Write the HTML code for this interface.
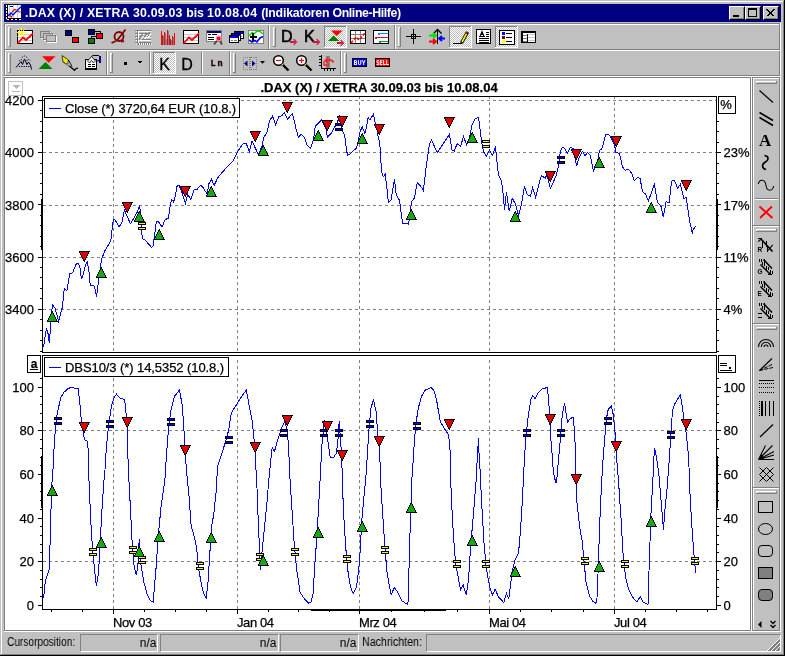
<!DOCTYPE html>
<html><head><meta charset="utf-8"><title>.DAX (X) / XETRA</title>
<style>
html,body{margin:0;padding:0;}
body{width:785px;height:656px;overflow:hidden;background:#c0c0c0;position:relative;font-family:"Liberation Sans",sans-serif;font-size:12px;color:#000;}
.abs{position:absolute;}
svg,#titletext,.st{will-change:transform;}
#titlebar{left:4px;top:4px;width:777px;height:18px;background:#000080;}
#titletext{left:25px;top:6px;white-space:pre;color:#fff;font-weight:bold;font-size:12.33px;line-height:14px;white-space:nowrap;}
.capbtn{top:6px;width:16px;height:14px;background:#c0c0c0;box-sizing:border-box;border:1px solid;border-color:#fff #000 #000 #fff;}
.capbtn i{position:absolute;left:0;top:0;right:0;bottom:0;border:1px solid;border-color:#c0c0c0 #808080 #808080 #c0c0c0;}
.hl{background:#fff;}
.sh{background:#808080;}
.grip{width:3px;box-sizing:border-box;border:1px solid;border-color:#fff #808080 #808080 #fff;background:#c0c0c0;}
.sunk{box-sizing:border-box;border:1px solid;border-color:#808080 #fff #fff #808080;}
#chart text{stroke:#000;stroke-width:.25px;}
.st{font-size:11px;line-height:13px;white-space:nowrap;}
</style></head><body>
<!-- window frame -->
<div class="abs hl" style="left:1px;top:1px;width:782px;height:1px"></div>
<div class="abs hl" style="left:1px;top:1px;width:1px;height:653px"></div>
<div class="abs sh" style="left:783px;top:1px;width:1px;height:654px"></div>
<div class="abs sh" style="left:1px;top:654px;width:783px;height:1px"></div>
<div class="abs" style="left:784px;top:0;width:1px;height:656px;background:#000"></div>
<div class="abs" style="left:0;top:655px;width:785px;height:1px;background:#000"></div>
<!-- title bar -->
<div id="titlebar" class="abs"></div>
<svg class="abs" style="left:6px;top:5px" width="15" height="15" viewBox="0 0 15 15">
<g shape-rendering="crispEdges"><rect x="0" y="0" width="15" height="15" fill="#000"/>
<rect x="2" y="0" width="13" height="13" fill="#fff"/>
<rect x="3" y="0" width="1" height="13" fill="#c8c8c8"/>
<rect x="7" y="0" width="1" height="13" fill="#c8c8c8"/>
<rect x="11" y="0" width="1" height="13" fill="#c8c8c8"/>
<rect x="0" y="0" width="1" height="2" fill="#fff"/>
<rect x="0" y="3" width="1" height="2" fill="#fff"/>
<rect x="0" y="6" width="1" height="2" fill="#fff"/>
<rect x="0" y="9" width="1" height="2" fill="#fff"/>
<rect x="0" y="12" width="1" height="2" fill="#fff"/>
<rect x="1" y="14" width="2" height="1" fill="#fff"/>
<rect x="5" y="14" width="2" height="1" fill="#fff"/>
<rect x="9" y="14" width="2" height="1" fill="#fff"/>
<rect x="13" y="14" width="2" height="1" fill="#fff"/>
<rect x="4" y="1" width="3" height="1" fill="#000"/></g>
<path d="M2 9L4 10L5.5 7.5L7 6L9 4.5L11 5.5L13 7H15" stroke="#ff0000" stroke-width="1.2" fill="none"/><path d="M4 10.5L5.3 12L6.5 10.5" stroke="#ff0000" stroke-width="1.2" fill="none"/>
<path d="M2 10L5 7L7 9L15 1" stroke="#00e0ff" stroke-width="1" fill="none"/>
<path d="M2 11L5 8L7 10L15 2" stroke="#0000ff" stroke-width="1.1" fill="none"/>
</svg>
<div id="titletext" class="abs"><span style="letter-spacing:.21px">.DAX (X) / XETRA 30.09.03 </span><span style="letter-spacing:-.09px">bis </span><span style="letter-spacing:.29px">10.08.04 </span><span style="letter-spacing:-.2px">(Indikatoren </span><span style="letter-spacing:-.4px">Online-Hilfe)</span></div>
<div class="abs capbtn" style="left:729px"><i></i><b class="abs" style="left:3px;top:8px;width:6px;height:2px;background:#000"></b></div>
<div class="abs capbtn" style="left:745px"><i></i><b class="abs" style="left:2px;top:1px;width:9px;height:9px;box-sizing:border-box;border:1px solid #000;border-top-width:2px"></b></div>
<div class="abs capbtn" style="left:763px"><i></i>
<svg class="abs" style="left:2px;top:2px" width="9" height="8" viewBox="0 0 9 8" shape-rendering="crispEdges"><path d="M0.5 0.5L7.5 7.5M1.5 0.5L8.5 7.5M7.5 0.5L0.5 7.5M8.5 0.5L1.5 7.5" stroke="#000" stroke-width="1" fill="none"/></svg></div>
<!-- toolbar etched frame -->
<div class="abs sh" style="left:4px;top:23px;width:776px;height:1px"></div>
<div class="abs hl" style="left:4px;top:24px;width:777px;height:1px"></div>
<div class="abs sh" style="left:4px;top:23px;width:1px;height:53px"></div>
<div class="abs hl" style="left:5px;top:24px;width:1px;height:52px"></div>
<div class="abs sh" style="left:779px;top:24px;width:1px;height:52px"></div>
<div class="abs hl" style="left:780px;top:23px;width:1px;height:54px"></div>
<div class="abs sh" style="left:4px;top:49px;width:776px;height:1px"></div>
<div class="abs hl" style="left:5px;top:50px;width:775px;height:1px"></div>
<div class="abs sh" style="left:4px;top:75px;width:776px;height:1px"></div>
<div class="abs hl" style="left:4px;top:76px;width:777px;height:1px"></div>
<div class="abs grip" style="left:8px;top:27px;height:20px"></div>
<div class="abs grip" style="left:8px;top:53px;height:20px"></div>
<svg class="abs" style="left:0;top:0" width="785" height="77" viewBox="0 0 785 77" font-family="'Liberation Sans',sans-serif">
<defs><pattern id="chk" width="2" height="2" patternUnits="userSpaceOnUse"><rect width="2" height="2" fill="#fff"/><rect x="0" y="0" width="1" height="1" fill="#c0c0c0"/><rect x="1" y="1" width="1" height="1" fill="#c0c0c0"/></pattern></defs>
<g shape-rendering="crispEdges">
<rect x="268" y="25" width="1" height="24" fill="#808080"/><rect x="269" y="25" width="1" height="24" fill="#fff"/>
<rect x="273" y="27" width="3" height="20" fill="#c0c0c0"/><rect x="273" y="27" width="1" height="20" fill="#fff"/><rect x="273" y="27" width="3" height="1" fill="#fff"/><rect x="275" y="27" width="1" height="20" fill="#808080"/><rect x="273" y="46" width="3" height="1" fill="#808080"/>
<rect x="394" y="25" width="1" height="24" fill="#808080"/><rect x="395" y="25" width="1" height="24" fill="#fff"/>
<rect x="398" y="27" width="3" height="20" fill="#c0c0c0"/><rect x="398" y="27" width="1" height="20" fill="#fff"/><rect x="398" y="27" width="3" height="1" fill="#fff"/><rect x="400" y="27" width="1" height="20" fill="#808080"/><rect x="398" y="46" width="3" height="1" fill="#808080"/>
<rect x="106" y="51" width="1" height="24" fill="#808080"/><rect x="107" y="51" width="1" height="24" fill="#fff"/>
<rect x="110" y="53" width="3" height="20" fill="#c0c0c0"/><rect x="110" y="53" width="1" height="20" fill="#fff"/><rect x="110" y="53" width="3" height="1" fill="#fff"/><rect x="112" y="53" width="1" height="20" fill="#808080"/><rect x="110" y="72" width="3" height="1" fill="#808080"/>
<rect x="149" y="52" width="1" height="22" fill="#808080"/><rect x="150" y="52" width="1" height="22" fill="#fff"/>
<rect x="201" y="52" width="1" height="22" fill="#808080"/><rect x="202" y="52" width="1" height="22" fill="#fff"/>
<rect x="229" y="51" width="1" height="24" fill="#808080"/><rect x="230" y="51" width="1" height="24" fill="#fff"/>
<rect x="233" y="53" width="3" height="20" fill="#c0c0c0"/><rect x="233" y="53" width="1" height="20" fill="#fff"/><rect x="233" y="53" width="3" height="1" fill="#fff"/><rect x="235" y="53" width="1" height="20" fill="#808080"/><rect x="233" y="72" width="3" height="1" fill="#808080"/>
<rect x="340" y="51" width="1" height="24" fill="#808080"/><rect x="341" y="51" width="1" height="24" fill="#fff"/>
<rect x="344" y="53" width="3" height="20" fill="#c0c0c0"/><rect x="344" y="53" width="1" height="20" fill="#fff"/><rect x="344" y="53" width="3" height="1" fill="#fff"/><rect x="346" y="53" width="1" height="20" fill="#808080"/><rect x="344" y="72" width="3" height="1" fill="#808080"/>
<rect x="17.5" y="30.5" width="15" height="13" fill="#fff" stroke="#000"/>
<rect x="18" y="34" width="14" height="1" fill="#c8c8c8"/>
<rect x="18" y="37" width="14" height="1" fill="#c8c8c8"/>
<rect x="18" y="40" width="14" height="1" fill="#c8c8c8"/>
</g>
<path d="M17.5 43.5L23 37.5L26 40L33 33.5" stroke="#ff0000" stroke-width="1.8" fill="none"/>
<path d="M17.5 28.5L25.5 36.5M25.5 28.5L17.5 36.5M21.5 27.5V37.5M16.5 32.5H26.5" stroke="#ffff00" stroke-width="0.9"/>
<g shape-rendering="crispEdges">
<rect x="41.5" y="32.5" width="9" height="6" fill="#c0c0c0" stroke="#fff"/>
<rect x="40.5" y="31.5" width="9" height="6" fill="#c0c0c0" stroke="#808080"/>
<rect x="44.5" y="34.5" width="9" height="6" fill="#c0c0c0" stroke="#fff"/>
<rect x="43.5" y="33.5" width="9" height="6" fill="#c0c0c0" stroke="#808080"/>
<rect x="47.5" y="36.5" width="9" height="6" fill="#c0c0c0" stroke="#fff"/>
<rect x="46.5" y="35.5" width="9" height="6" fill="#c0c0c0" stroke="#808080"/>
<rect x="65.5" y="30.5" width="6" height="5" fill="#000080" stroke="#000"/>
<rect x="72.5" y="37.5" width="6" height="5" fill="#ff0000" stroke="#000"/>
<path d="M95 31.5H100.5V33M96 36.5H91.5V38" stroke="#000" fill="none"/>
<rect x="88.5" y="29.5" width="6" height="5" fill="#000080" stroke="#000"/>
<rect x="96.5" y="33.5" width="6" height="5" fill="#ff0000" stroke="#000"/>
<rect x="88.5" y="38.5" width="6" height="5" fill="#008000" stroke="#000"/>
</g>
<g stroke="#800000" stroke-width="1.8" fill="none"><circle cx="119" cy="36.5" r="4.5"/><path d="M125.5 29.5L117 40.5M116 41L111.5 43M121 41.5L124 41"/></g>
<g shape-rendering="crispEdges">
<rect x="135" y="30" width="16" height="1" fill="#808080"/><rect x="136" y="31" width="15" height="1" fill="#fff"/>
<rect x="135" y="33" width="16" height="1" fill="#808080"/><rect x="136" y="34" width="15" height="1" fill="#fff"/>
<rect x="135" y="36" width="16" height="1" fill="#808080"/><rect x="136" y="37" width="15" height="1" fill="#fff"/>
<rect x="135" y="39" width="16" height="1" fill="#808080"/><rect x="136" y="40" width="15" height="1" fill="#fff"/>
<rect x="135" y="42" width="16" height="1" fill="#808080"/><rect x="136" y="43" width="15" height="1" fill="#fff"/>
<rect x="137" y="30" width="1" height="14" fill="#808080"/><rect x="138" y="31" width="1" height="13" fill="#fff"/>
<rect x="138" y="43" width="1" height="2" fill="#808080"/><rect x="139" y="44" width="1" height="1" fill="#fff"/>
<rect x="140" y="43" width="1" height="2" fill="#808080"/><rect x="141" y="44" width="1" height="1" fill="#fff"/>
<rect x="142" y="43" width="1" height="2" fill="#808080"/><rect x="143" y="44" width="1" height="1" fill="#fff"/>
<rect x="144" y="43" width="1" height="2" fill="#808080"/><rect x="145" y="44" width="1" height="1" fill="#fff"/>
<rect x="146" y="43" width="1" height="2" fill="#808080"/><rect x="147" y="44" width="1" height="1" fill="#fff"/>
<rect x="148" y="43" width="1" height="2" fill="#808080"/><rect x="149" y="44" width="1" height="1" fill="#fff"/>
<rect x="150" y="43" width="1" height="2" fill="#808080"/><rect x="151" y="44" width="1" height="1" fill="#fff"/>
</g>
<path d="M139 40L142 35L144 38L146 34L148 36L150 32" stroke="#808080" stroke-width="1.5" fill="none"/>
<path d="M140 41L143 36L145 39L147 35L149 37L151 33" stroke="#fff" stroke-width="1" fill="none"/>
<g shape-rendering="crispEdges">
<rect x="161" y="31" width="1" height="14" fill="#ff0000"/>
<rect x="162" y="35" width="1" height="10" fill="#ff0000"/>
<rect x="163" y="36" width="1" height="9" fill="#6a8a8a"/>
<rect x="164" y="32" width="1" height="13" fill="#ff0000"/>
<rect x="165" y="33" width="1" height="12" fill="#6a8a8a"/>
<rect x="166" y="39" width="1" height="6" fill="#6a8a8a"/>
<rect x="167" y="30" width="1" height="15" fill="#ff0000"/>
<rect x="168" y="31" width="1" height="14" fill="#6a8a8a"/>
<rect x="169" y="35" width="1" height="10" fill="#ff0000"/>
<rect x="170" y="39" width="1" height="6" fill="#ff0000"/>
<rect x="171" y="40" width="1" height="5" fill="#6a8a8a"/>
<rect x="172" y="36" width="1" height="9" fill="#ff0000"/>
<rect x="173" y="37" width="1" height="8" fill="#6a8a8a"/>
<rect x="174" y="33" width="1" height="12" fill="#ff0000"/>
<rect x="183.5" y="30.5" width="15" height="13" fill="#fff" stroke="#000"/>
<rect x="184" y="34" width="14" height="1" fill="#c8c8c8"/>
<rect x="184" y="37" width="14" height="1" fill="#c8c8c8"/>
<rect x="184" y="40" width="14" height="1" fill="#c8c8c8"/>
</g>
<path d="M183.5 43.5L189 37.5L192 40L199 33.5" stroke="#ff0000" stroke-width="1.8" fill="none"/>
<g shape-rendering="crispEdges">
<rect x="206.5" y="30.5" width="15" height="11" fill="#fff" stroke="#808080"/>
<rect x="207" y="31" width="14" height="2" fill="#000080"/>
<rect x="208" y="34" width="3" height="1" fill="#000"/><rect x="212" y="34" width="5" height="1" fill="#000"/><rect x="208" y="37" width="6" height="1" fill="#000"/><rect x="208" y="39" width="6" height="1" fill="#000"/>
</g>
<path d="M217.5 40L214 44.5M219.5 40L222 44.5" stroke="#404040" stroke-width="1.6"/>
<circle cx="218.7" cy="38.5" r="2.9" fill="#ff90b0"/><circle cx="218.7" cy="38.5" r="1.8" fill="#ff0000"/>
<g shape-rendering="crispEdges">
<rect x="234.5" y="31.5" width="9" height="7" fill="#fff" stroke="#000"/>
<rect x="235" y="32" width="8" height="2" fill="#0000e0"/>
<rect x="236" y="36" width="2" height="1" fill="#808080"/><rect x="239" y="36" width="3" height="1" fill="#808080"/>
<rect x="231.5" y="33.5" width="9" height="7" fill="#fff" stroke="#000"/>
<rect x="232" y="34" width="8" height="2" fill="#0000e0"/>
<rect x="233" y="38" width="2" height="1" fill="#808080"/><rect x="236" y="38" width="3" height="1" fill="#808080"/>
<rect x="229.5" y="35.5" width="9" height="7" fill="#fff" stroke="#000"/>
<rect x="230" y="36" width="8" height="2" fill="#0000e0"/>
<rect x="231" y="40" width="2" height="1" fill="#808080"/><rect x="234" y="40" width="3" height="1" fill="#808080"/>
<rect x="248.5" y="30.5" width="15" height="13" fill="#fff" stroke="#808080"/>
</g>
<path d="M249 36L252 32.5L254 34L257 31L260 31.5L263 34" stroke="#00e000" stroke-width="1.6" fill="none"/>
<path d="M249 40L252 42L255 40.5L257 42L260 38L263 36.5" stroke="#0000ff" stroke-width="1.6" fill="none"/>
<g shape-rendering="crispEdges">
<rect x="250" y="36" width="7" height="2" fill="#000"/><rect x="252" y="33" width="2" height="8" fill="#000"/>
</g>
<text x="281" y="42" font-size="16" stroke="#000" stroke-width="0.6">D</text>
<text x="304" y="42" font-size="16.3" stroke="#000" stroke-width="0.6">K</text>
<path d="M290 41H294.8V43H290Z" fill="#cc1038"/><path d="M294.1 38.8L297.3 42L294.1 45.2L293.3 44.4L295.5 42L293.3 39.6Z" fill="#cc1038"/>
<path d="M313 41H317.8V43H313Z" fill="#cc1038"/><path d="M317.1 38.8L320.3 42L317.1 45.2L316.3 44.4L318.5 42L316.3 39.6Z" fill="#cc1038"/>
<g shape-rendering="crispEdges">
<rect x="324" y="26" width="23" height="22" fill="url(#chk)"/>
<rect x="324" y="26" width="23" height="1" fill="#808080"/><rect x="324" y="26" width="1" height="22" fill="#808080"/>
<rect x="324" y="47" width="23" height="1" fill="#fff"/><rect x="346" y="26" width="1" height="22" fill="#fff"/>
</g>
<path d="M331 30.5H342.5L336.7 36Z" fill="#ff0000"/><path d="M333.7 35.5L339.5 41H328Z" fill="#008000"/>
<path d="M337 42H341.8V44H337Z" fill="#cc1038"/><path d="M341.1 39.8L344.3 43L341.1 46.2L340.3 45.4L342.5 43L340.3 40.6Z" fill="#cc1038"/>
<g shape-rendering="crispEdges">
<rect x="350.5" y="30.5" width="15" height="13" fill="#fff" stroke="#000"/>
<rect x="355" y="31" width="1" height="12" fill="#808080"/><rect x="360" y="31" width="1" height="12" fill="#808080"/><rect x="351" y="34" width="14" height="1" fill="#808080"/><rect x="351" y="38" width="14" height="1" fill="#808080"/>
</g>
<path d="M351 43L356 37L359 40L365 33" stroke="#ff0000" stroke-width="1.6" stroke-dasharray="3 1.5" fill="none"/>
<g shape-rendering="crispEdges">
<rect x="373.5" y="30.5" width="15" height="13" fill="#fff" stroke="#000"/>
<rect x="379" y="33" width="9" height="1" fill="#0090ff"/><rect x="378" y="33" width="2" height="2" fill="#0090ff"/>
<rect x="375" y="37" width="13" height="1" fill="#cc1038"/><rect x="375" y="37" width="2" height="2" fill="#cc1038"/>
<rect x="380" y="41" width="8" height="1" fill="#00a040"/><rect x="379" y="41" width="2" height="2" fill="#00a040"/>
<rect x="406" y="36" width="15" height="1" fill="#000"/><rect x="413" y="29" width="1" height="15" fill="#000"/>
<rect x="411.5" y="34.5" width="4" height="4" fill="none" stroke="#000"/>
<rect x="437" y="30" width="1" height="14" fill="#000"/>
</g>
<path d="M433.5 33.5L437.5 29.5L441.5 33.5" stroke="#000" stroke-width="1.4" fill="none"/>
<path d="M429 35.5H436M433 33L436 35.5L433 38" stroke="#00e000" stroke-width="1.8" fill="none"/>
<path d="M429 41.5H436M433 39L436 41.5L433 44" stroke="#ff0000" stroke-width="1.8" fill="none"/>
<path d="M445 38.5H439M442 36L439 38.5L442 41" stroke="#0000ff" stroke-width="1.8" fill="none"/>
<g shape-rendering="crispEdges">
<rect x="449" y="26" width="23" height="22" fill="url(#chk)"/>
<rect x="449" y="26" width="23" height="1" fill="#808080"/><rect x="449" y="26" width="1" height="22" fill="#808080"/>
<rect x="449" y="47" width="23" height="1" fill="#fff"/><rect x="471" y="26" width="1" height="22" fill="#fff"/>
<rect x="453" y="43" width="9" height="1" fill="#000"/>
</g>
<path d="M461.5 43L467.5 32" stroke="#000" stroke-width="3.4"/><path d="M462 42L466.5 33.7" stroke="#ffff00" stroke-width="1.6"/><path d="M466.8 33.2L467.6 31.8" stroke="#e00000" stroke-width="1.6"/>
<g shape-rendering="crispEdges">
<rect x="476.5" y="29.5" width="14" height="14" fill="#fff" stroke="#000"/>
<rect x="479" y="38" width="10" height="1" fill="#000"/>
<rect x="479" y="40" width="10" height="1" fill="#000"/>
<rect x="479" y="42" width="10" height="1" fill="#000"/>
<rect x="486" y="32" width="3" height="1" fill="#000"/>
<rect x="486" y="34" width="3" height="1" fill="#000"/>
<rect x="486" y="36" width="3" height="1" fill="#000"/>
</g>
<path d="M479 36.5H485M480.2 36L482 31.5L483.8 36M480.8 34.5H483.2" stroke="#000" stroke-width="1.1" fill="none"/>
<g shape-rendering="crispEdges">
<rect x="495" y="26" width="23" height="22" fill="url(#chk)"/>
<rect x="495" y="26" width="23" height="1" fill="#808080"/><rect x="495" y="26" width="1" height="22" fill="#808080"/>
<rect x="495" y="47" width="23" height="1" fill="#fff"/><rect x="517" y="26" width="1" height="22" fill="#fff"/>
<rect x="499.5" y="30.5" width="15" height="14" fill="#fff" stroke="#000"/>
<rect x="502" y="32" width="3" height="3" fill="#0000ff"/><rect x="506" y="33" width="6" height="1" fill="#000"/>
<rect x="502" y="36" width="3" height="3" fill="#800000"/><rect x="506" y="37" width="6" height="1" fill="#000"/>
<rect x="502" y="40" width="3" height="3" fill="#ffff00"/><rect x="506" y="41" width="6" height="1" fill="#000"/>
<rect x="521.5" y="31.5" width="14" height="11" fill="#fff" stroke="#000"/>
<rect x="522" y="32" width="13" height="1" fill="#000"/><rect x="522" y="32" width="1" height="10" fill="#000"/>
<rect x="523" y="35" width="4" height="1" fill="#808080"/><rect x="528" y="34" width="7" height="1" fill="#c8c8c8"/>
<rect x="523" y="38" width="4" height="1" fill="#808080"/><rect x="528" y="37" width="7" height="1" fill="#c8c8c8"/>
<rect x="523" y="41" width="4" height="1" fill="#808080"/><rect x="528" y="40" width="7" height="1" fill="#c8c8c8"/>
<rect x="527" y="34" width="1" height="8" fill="#000"/>
</g>
<path d="M16 67.5L21 61.5L22.5 64.5L24.5 59L27 64.5L28.5 62L30.5 65L31.5 69.5" stroke="#000" stroke-width="1" fill="none"/>
<g stroke="#000090" stroke-width="1" fill="none" stroke-dasharray="1.3 1"><path d="M19 61Q21 58 23 61"/><path d="M22 57.5Q24.5 54.5 27 57.5"/><path d="M26.5 61Q28.5 58 30.5 61"/><path d="M19 66.5H30"/></g>
<path d="M42 56.3H55.5L48.7 62.7Z" fill="#ff0000"/><path d="M45.5 62L52.5 69H38.5Z" fill="#008000"/>
<path d="M62 55.5L68.5 60L67.5 64.5L63 62Z" fill="#f4e800" stroke="#000" stroke-width="0.7"/>
<path d="M63 62L67.5 64.5L71 67L67 65.5Z" fill="#fff" stroke="#404040" stroke-width="0.6"/>
<path d="M68.5 60L72 66.5" stroke="#000" stroke-width="0.9"/>
<path d="M69.5 66L74.5 70.3L76 68.5L78 68.2" stroke="#000" stroke-width="1.2" fill="none"/>
<g shape-rendering="crispEdges">
<rect x="85" y="59" width="12" height="11" fill="#000"/><rect x="86" y="60" width="10" height="8" fill="#fff"/>
<rect x="88" y="64" width="3" height="1" fill="#000"/><rect x="92" y="64" width="3" height="1" fill="#000"/><rect x="88" y="66" width="3" height="1" fill="#000"/><rect x="92" y="66" width="3" height="1" fill="#000"/>
<rect x="99" y="56" width="2" height="7" fill="#000090"/>
</g>
<path d="M87.5 61L91.5 56.5L95.5 61L93.5 63L91.5 60.5L89.5 63Z" fill="#f0f0f0" stroke="#000" stroke-width="0.8"/><path d="M91.5 56.5L93 55.5H99" stroke="#000" stroke-width="1" fill="none"/><path d="M96 61.5L99 60.5" stroke="#000" stroke-width="1"/>
<g shape-rendering="crispEdges">
<rect x="124" y="62" width="3" height="3" fill="#000"/>
<path d="M137 61H142L139.5 63.5Z" fill="#000"/>
<rect x="153" y="52" width="23" height="22" fill="url(#chk)"/>
<rect x="153" y="52" width="23" height="1" fill="#808080"/><rect x="153" y="52" width="1" height="22" fill="#808080"/>
<rect x="153" y="73" width="23" height="1" fill="#fff"/><rect x="175" y="52" width="1" height="22" fill="#fff"/>
</g>
<text x="159.3" y="69.5" font-size="16" stroke="#000" stroke-width="0.35">K</text>
<text x="181.3" y="69.5" font-size="16" stroke="#000" stroke-width="0.35">D</text>
<text x="210.5" y="66" font-size="8.5" font-weight="bold" fill="#200808" letter-spacing="1.8" font-family="'Liberation Mono',monospace" stroke="#200808" stroke-width="0.4">Ln</text>
<g shape-rendering="crispEdges">
<rect x="243" y="57" width="1" height="1" fill="#808080"/>
<rect x="243" y="69" width="1" height="1" fill="#808080"/>
<rect x="245" y="57" width="1" height="1" fill="#808080"/>
<rect x="245" y="69" width="1" height="1" fill="#808080"/>
<rect x="247" y="57" width="1" height="1" fill="#808080"/>
<rect x="247" y="69" width="1" height="1" fill="#808080"/>
<rect x="249" y="57" width="1" height="1" fill="#808080"/>
<rect x="249" y="69" width="1" height="1" fill="#808080"/>
<rect x="251" y="57" width="1" height="1" fill="#808080"/>
<rect x="251" y="69" width="1" height="1" fill="#808080"/>
<rect x="253" y="57" width="1" height="1" fill="#808080"/>
<rect x="253" y="69" width="1" height="1" fill="#808080"/>
<rect x="255" y="57" width="1" height="1" fill="#808080"/>
<rect x="255" y="69" width="1" height="1" fill="#808080"/>
<rect x="243" y="57" width="1" height="1" fill="#808080"/>
<rect x="249" y="57" width="1" height="1" fill="#808080"/>
<rect x="250" y="57" width="1" height="1" fill="#808080"/>
<rect x="256" y="57" width="1" height="1" fill="#808080"/>
<rect x="243" y="59" width="1" height="1" fill="#808080"/>
<rect x="249" y="59" width="1" height="1" fill="#808080"/>
<rect x="250" y="59" width="1" height="1" fill="#808080"/>
<rect x="256" y="59" width="1" height="1" fill="#808080"/>
<rect x="243" y="61" width="1" height="1" fill="#808080"/>
<rect x="249" y="61" width="1" height="1" fill="#808080"/>
<rect x="250" y="61" width="1" height="1" fill="#808080"/>
<rect x="256" y="61" width="1" height="1" fill="#808080"/>
<rect x="243" y="63" width="1" height="1" fill="#808080"/>
<rect x="249" y="63" width="1" height="1" fill="#808080"/>
<rect x="250" y="63" width="1" height="1" fill="#808080"/>
<rect x="256" y="63" width="1" height="1" fill="#808080"/>
<rect x="243" y="65" width="1" height="1" fill="#808080"/>
<rect x="249" y="65" width="1" height="1" fill="#808080"/>
<rect x="250" y="65" width="1" height="1" fill="#808080"/>
<rect x="256" y="65" width="1" height="1" fill="#808080"/>
<rect x="243" y="67" width="1" height="1" fill="#808080"/>
<rect x="249" y="67" width="1" height="1" fill="#808080"/>
<rect x="250" y="67" width="1" height="1" fill="#808080"/>
<rect x="256" y="67" width="1" height="1" fill="#808080"/>
<rect x="243" y="69" width="1" height="1" fill="#808080"/>
<rect x="249" y="69" width="1" height="1" fill="#808080"/>
<rect x="250" y="69" width="1" height="1" fill="#808080"/>
<rect x="256" y="69" width="1" height="1" fill="#808080"/>
</g>
<path d="M244 63.5L247.5 60.5V66.5Z" fill="#000090"/><path d="M255.5 63.5L252 60.5V66.5Z" fill="#000090"/>
<path d="M260 61H265L262.5 63.8Z" fill="#000"/>
<path d="M282.5 64.5L288.5 70.5" stroke="#000" stroke-width="2.4"/>
<circle cx="278.5" cy="60.5" r="4.8" fill="#fff" stroke="#000" stroke-width="1.5"/>
<path d="M276.0 60.5H281.0" stroke="#ff0000" stroke-width="1.2"/>
<rect x="281.8" y="63.8" width="1.4" height="1.4" fill="#ffff00"/>
<path d="M305.5 64.5L311.5 70.5" stroke="#000" stroke-width="2.4"/>
<circle cx="301.5" cy="60.5" r="4.8" fill="#fff" stroke="#000" stroke-width="1.5"/>
<path d="M299.0 60.5H304.0" stroke="#ff0000" stroke-width="1.2"/>
<path d="M301.5 58V63" stroke="#ff0000" stroke-width="1.2"/>
<rect x="304.8" y="63.8" width="1.4" height="1.4" fill="#ffff00"/>
<g shape-rendering="crispEdges">
<rect x="326" y="56" width="4" height="12" fill="#808080"/>
<rect x="321" y="55" width="1" height="14" fill="#000"/><rect x="321" y="68" width="15" height="1" fill="#000"/>
<rect x="319" y="56" width="2" height="1" fill="#000"/>
<rect x="319" y="59" width="2" height="1" fill="#000"/>
<rect x="319" y="62" width="2" height="1" fill="#000"/>
<rect x="319" y="65" width="2" height="1" fill="#000"/>
<rect x="324" y="69" width="1" height="2" fill="#000"/>
<rect x="327" y="69" width="1" height="2" fill="#000"/>
<rect x="330" y="69" width="1" height="2" fill="#000"/>
<rect x="333" y="69" width="1" height="2" fill="#000"/>
</g>
<path d="M333.5 62.5Q332 58.5 325 60.5" stroke="#ff2020" stroke-width="1.8" fill="none"/><path d="M327.5 57.5L324 61L328.5 63.5Z" fill="#ff2020"/><path d="M324 61V65H329" stroke="#ff2020" stroke-width="1.4" fill="none"/>
<g shape-rendering="crispEdges">
<rect x="352.5" y="58.5" width="14" height="8" fill="#0000ff" stroke="#000"/>
<rect x="375.5" y="58.5" width="14" height="8" fill="#ff0000" stroke="#000"/>
</g>
<text x="359.5" y="65" font-size="6.5" font-weight="bold" fill="#fff" text-anchor="middle" font-family="'DejaVu Sans',sans-serif" textLength="12" lengthAdjust="spacingAndGlyphs">BUY</text>
<text x="382.5" y="65" font-size="6.5" font-weight="bold" fill="#fff" text-anchor="middle" font-family="'DejaVu Sans',sans-serif" textLength="12.5" lengthAdjust="spacingAndGlyphs">SELL</text>
</svg>

<!-- client area -->
<div class="abs" style="left:4px;top:77px;width:746px;height:553px;background:#fff;box-sizing:border-box;border-left:1px solid #808080;border-top:1px solid #808080"></div>
<div class="abs sh" style="left:750px;top:77px;width:1px;height:554px"></div>
<div class="abs hl" style="left:751px;top:76px;width:1px;height:556px"></div>
<svg id="chart" class="abs" style="left:0;top:0" width="785" height="656" viewBox="0 0 785 656" font-family="'Liberation Sans',sans-serif" font-size="13">
<g shape-rendering="crispEdges">
<rect x="8.5" y="81.5" width="14" height="14" fill="#fff" stroke="#c0c0c0"/>
<path d="M12 85h8l-4 4z" fill="#b8b8b8"/><rect x="12" y="91" width="8" height="1" fill="#b8b8b8"/>
<path d="M43 100.5H716" stroke="#808080" stroke-dasharray="3 3" fill="none"/>
<path d="M43 152.5H716" stroke="#808080" stroke-dasharray="3 3" fill="none"/>
<path d="M43 205.5H716" stroke="#808080" stroke-dasharray="3 3" fill="none"/>
<path d="M43 257.5H716" stroke="#808080" stroke-dasharray="3 3" fill="none"/>
<path d="M43 309.5H716" stroke="#808080" stroke-dasharray="3 3" fill="none"/>
<path d="M43 430.5H716" stroke="#808080" stroke-dasharray="3 3" fill="none"/>
<path d="M43 561.5H716" stroke="#808080" stroke-dasharray="3 3" fill="none"/>
<path d="M113.5 96V352" stroke="#808080" stroke-dasharray="3 3" fill="none"/>
<path d="M113.5 360V609" stroke="#808080" stroke-dasharray="3 3" fill="none"/>
<path d="M237.5 96V352" stroke="#808080" stroke-dasharray="3 3" fill="none"/>
<path d="M237.5 360V609" stroke="#808080" stroke-dasharray="3 3" fill="none"/>
<path d="M359.5 96V352" stroke="#808080" stroke-dasharray="3 3" fill="none"/>
<path d="M359.5 360V609" stroke="#808080" stroke-dasharray="3 3" fill="none"/>
<path d="M489.5 96V352" stroke="#808080" stroke-dasharray="3 3" fill="none"/>
<path d="M489.5 360V609" stroke="#808080" stroke-dasharray="3 3" fill="none"/>
<path d="M614.5 96V352" stroke="#808080" stroke-dasharray="3 3" fill="none"/>
<path d="M614.5 360V609" stroke="#808080" stroke-dasharray="3 3" fill="none"/>
<g fill="#000">
<rect x="42" y="96" width="675" height="1"/>
<rect x="42" y="352" width="675" height="1"/>
<rect x="42" y="96" width="1" height="257"/>
<rect x="716" y="96" width="1" height="257"/>
<rect x="41" y="199" width="1" height="51"/>
<rect x="717" y="199" width="1" height="51"/>
<rect x="42" y="355" width="675" height="1"/>
<rect x="42" y="609" width="675" height="1"/>
<rect x="42" y="355" width="1" height="255"/>
<rect x="716" y="355" width="1" height="255"/>
<rect x="41" y="456" width="1" height="52"/>
<rect x="717" y="456" width="1" height="52"/>
<rect x="311" y="610" width="135" height="1"/>
<rect x="38" y="100" width="4" height="1"/>
<rect x="40" y="110" width="2" height="1"/>
<rect x="40" y="121" width="2" height="1"/>
<rect x="717" y="121" width="2" height="1"/>
<rect x="40" y="131" width="2" height="1"/>
<rect x="717" y="131" width="2" height="1"/>
<rect x="40" y="142" width="2" height="1"/>
<rect x="717" y="142" width="2" height="1"/>
<rect x="38" y="152" width="4" height="1"/>
<rect x="717" y="152" width="4" height="1"/>
<rect x="40" y="163" width="2" height="1"/>
<rect x="717" y="163" width="2" height="1"/>
<rect x="40" y="173" width="2" height="1"/>
<rect x="717" y="173" width="2" height="1"/>
<rect x="40" y="183" width="2" height="1"/>
<rect x="717" y="183" width="2" height="1"/>
<rect x="40" y="194" width="2" height="1"/>
<rect x="717" y="194" width="2" height="1"/>
<rect x="38" y="204" width="4" height="1"/>
<rect x="717" y="204" width="4" height="1"/>
<rect x="40" y="215" width="2" height="1"/>
<rect x="717" y="215" width="2" height="1"/>
<rect x="40" y="225" width="2" height="1"/>
<rect x="717" y="225" width="2" height="1"/>
<rect x="40" y="236" width="2" height="1"/>
<rect x="717" y="236" width="2" height="1"/>
<rect x="40" y="246" width="2" height="1"/>
<rect x="717" y="246" width="2" height="1"/>
<rect x="38" y="257" width="4" height="1"/>
<rect x="717" y="257" width="4" height="1"/>
<rect x="40" y="267" width="2" height="1"/>
<rect x="717" y="267" width="2" height="1"/>
<rect x="40" y="277" width="2" height="1"/>
<rect x="717" y="277" width="2" height="1"/>
<rect x="40" y="288" width="2" height="1"/>
<rect x="717" y="288" width="2" height="1"/>
<rect x="40" y="298" width="2" height="1"/>
<rect x="717" y="298" width="2" height="1"/>
<rect x="38" y="309" width="4" height="1"/>
<rect x="717" y="309" width="4" height="1"/>
<rect x="40" y="319" width="2" height="1"/>
<rect x="717" y="319" width="2" height="1"/>
<rect x="40" y="330" width="2" height="1"/>
<rect x="717" y="330" width="2" height="1"/>
<rect x="40" y="340" width="2" height="1"/>
<rect x="717" y="340" width="2" height="1"/>
<rect x="40" y="351" width="2" height="1"/>
<rect x="717" y="351" width="2" height="1"/>
<rect x="40" y="378" width="2" height="1"/><rect x="717" y="378" width="2" height="1"/>
<rect x="38" y="387" width="4" height="1"/><rect x="717" y="387" width="4" height="1"/>
<rect x="40" y="396" width="2" height="1"/><rect x="717" y="396" width="2" height="1"/>
<rect x="40" y="404" width="2" height="1"/><rect x="717" y="404" width="2" height="1"/>
<rect x="40" y="413" width="2" height="1"/><rect x="717" y="413" width="2" height="1"/>
<rect x="40" y="422" width="2" height="1"/><rect x="717" y="422" width="2" height="1"/>
<rect x="38" y="430" width="4" height="1"/><rect x="717" y="430" width="4" height="1"/>
<rect x="40" y="439" width="2" height="1"/><rect x="717" y="439" width="2" height="1"/>
<rect x="40" y="448" width="2" height="1"/><rect x="717" y="448" width="2" height="1"/>
<rect x="40" y="457" width="2" height="1"/><rect x="717" y="457" width="2" height="1"/>
<rect x="40" y="465" width="2" height="1"/><rect x="717" y="465" width="2" height="1"/>
<rect x="38" y="474" width="4" height="1"/><rect x="717" y="474" width="4" height="1"/>
<rect x="40" y="483" width="2" height="1"/><rect x="717" y="483" width="2" height="1"/>
<rect x="40" y="491" width="2" height="1"/><rect x="717" y="491" width="2" height="1"/>
<rect x="40" y="500" width="2" height="1"/><rect x="717" y="500" width="2" height="1"/>
<rect x="40" y="509" width="2" height="1"/><rect x="717" y="509" width="2" height="1"/>
<rect x="38" y="518" width="4" height="1"/><rect x="717" y="518" width="4" height="1"/>
<rect x="40" y="526" width="2" height="1"/><rect x="717" y="526" width="2" height="1"/>
<rect x="40" y="535" width="2" height="1"/><rect x="717" y="535" width="2" height="1"/>
<rect x="40" y="544" width="2" height="1"/><rect x="717" y="544" width="2" height="1"/>
<rect x="40" y="552" width="2" height="1"/><rect x="717" y="552" width="2" height="1"/>
<rect x="38" y="561" width="4" height="1"/><rect x="717" y="561" width="4" height="1"/>
<rect x="40" y="570" width="2" height="1"/><rect x="717" y="570" width="2" height="1"/>
<rect x="40" y="579" width="2" height="1"/><rect x="717" y="579" width="2" height="1"/>
<rect x="40" y="587" width="2" height="1"/><rect x="717" y="587" width="2" height="1"/>
<rect x="40" y="596" width="2" height="1"/><rect x="717" y="596" width="2" height="1"/>
<rect x="38" y="605" width="4" height="1"/><rect x="717" y="605" width="4" height="1"/>
<rect x="51" y="610" width="1" height="2"/>
<rect x="82" y="610" width="1" height="2"/>
<rect x="113" y="610" width="1" height="4"/>
<rect x="144" y="610" width="1" height="2"/>
<rect x="175" y="610" width="1" height="2"/>
<rect x="206" y="610" width="1" height="2"/>
<rect x="237" y="610" width="1" height="4"/>
<rect x="268" y="610" width="1" height="2"/>
<rect x="298" y="610" width="1" height="2"/>
<rect x="329" y="610" width="1" height="2"/>
<rect x="359" y="610" width="1" height="4"/>
<rect x="391" y="610" width="1" height="2"/>
<rect x="424" y="610" width="1" height="2"/>
<rect x="457" y="610" width="1" height="2"/>
<rect x="489" y="610" width="1" height="4"/>
<rect x="520" y="610" width="1" height="2"/>
<rect x="551" y="610" width="1" height="2"/>
<rect x="583" y="610" width="1" height="2"/>
<rect x="614" y="610" width="1" height="4"/>
<rect x="645" y="610" width="1" height="2"/>
<rect x="676" y="610" width="1" height="2"/>
<rect x="707" y="610" width="1" height="2"/>
</g>
</g>
<polyline points="43.5,347.5 46.4,328.2 47.9,332.7 49.3,342.7 52.4,304.3 55.1,308.4 58.6,321.2 62.4,307.1 64.3,288.6 66.9,291.1 69.7,273.6 72.6,272.8 76.0,264.2 78.3,263.3 80.5,269.4 81.3,279.2 83.4,274.0 85.6,264.2 87.3,262.3 88.8,269.4 90.2,285.1 93.1,285.1 94.4,286.6 96.6,296.5 98.9,277.7 100.3,268.1 101.6,259.1 104.8,250.8 109.9,242.5 111.6,237.4 112.2,227.1 113.5,219.2 115.3,220.1 119.1,226.9 122.1,222.0 124.4,209.8 126.6,215.0 130.4,223.7 134.2,217.5 137.8,211.0 139.5,205.2 140.4,212.2 141.6,230.2 142.3,238.5 145.5,240.4 151.5,247.4 153.2,245.5 154.7,234.0 156.4,221.5 158.5,221.8 162.1,227.0 165.3,219.3 168.3,218.6 169.8,208.4 171.5,199.4 173.6,202.0 175.6,195.0 176.8,186.6 178.8,185.1 182.0,192.4 185.4,203.5 187.7,194.3 190.9,199.7 194.1,189.8 197.3,189.2 200.4,185.3 202.9,187.2 207.2,194.2 208.8,184.0 211.4,179.1 214.2,185.3 217.8,177.6 224.4,169.9 233.4,160.3 238.5,150.1 243.0,143.7 246.2,143.4 249.4,151.7 252.0,141.1 258.4,154.6 261.9,146.2 263.6,137.9 267.0,132.1 269.6,120.6 272.5,116.1 275.6,124.4 278.9,116.5 281.8,115.9 284.3,112.3 287.5,119.3 292.3,113.6 293.9,119.3 296.2,129.6 298.4,137.2 301.2,134.4 304.2,137.2 307.1,144.9 310.6,148.5 313.5,139.8 315.3,126.4 321.4,120.2 326.3,129.6 327.3,137.2 330.8,134.0 334.6,127.0 337.2,123.8 339.3,115.5 342.9,132.1 344.5,134.7 346.1,146.2 347.4,155.2 350.0,153.9 356.4,148.1 357.6,144.3 359.6,133.4 362.1,126.4 364.9,133.4 366.2,128.5 368.1,117.4 369.8,120.0 373.4,114.5 374.7,120.6 376.2,125.7 378.1,136.0 379.8,143.6 380.7,159.0 381.7,171.9 383.3,176.7 385.2,174.4 386.8,187.2 388.4,202.2 391.0,200.0 392.9,188.5 394.5,179.3 396.1,193.6 397.4,197.5 399.6,200.3 401.0,211.6 402.5,223.1 407.0,223.3 408.3,224.4 409.6,218.0 411.5,202.0 414.7,197.5 416.6,184.7 417.5,183.1 420.4,185.7 423.4,190.4 424.7,179.6 426.2,166.8 427.5,157.0 429.6,143.6 431.5,140.1 437.3,152.6 449.4,134.4 450.5,141.1 452.0,150.3 454.3,151.1 457.1,143.6 460.7,146.2 463.5,136.2 466.7,145.2 469.3,138.5 471.8,125.7 475.0,119.1 478.6,117.4 480.2,130.8 482.1,144.9 484.0,152.6 486.3,156.4 489.5,150.3 492.6,155.4 495.5,146.2 496.8,160.0 498.4,175.0 501.4,180.7 502.9,191.2 504.5,209.8 506.4,192.2 509.3,211.4 512.3,198.2 515.7,204.6 518.5,215.5 521.5,204.0 524.4,186.3 527.2,194.8 530.4,196.3 532.6,187.4 535.6,197.3 541.3,175.5 545.2,178.1 547.1,174.6 550.3,188.6 556.0,176.2 558.6,165.6 560.3,152.2 561.8,148.2 563.8,147.4 567.3,152.9 570.5,147.4 573.0,148.4 575.0,157.4 576.5,166.3 578.8,158.6 582.3,151.2 585.2,155.7 587.4,152.2 590.3,155.1 592.0,163.8 593.5,171.4 595.4,167.6 598.4,157.4 599.3,150.7 601.8,149.0 603.8,142.0 605.7,134.3 608.6,134.1 611.4,138.2 614.6,145.2 615.9,152.2 619.1,153.5 620.6,157.5 622.3,166.6 625.1,170.2 628.3,169.2 631.5,173.0 634.3,180.5 637.9,177.1 640.2,178.8 642.4,191.6 645.6,194.2 648.4,201.2 654.3,184.3 655.8,192.2 657.4,202.5 661.0,206.3 663.3,217.2 666.1,201.8 669.3,202.5 670.6,188.4 671.8,181.0 674.4,180.3 677.6,188.1 680.4,184.3 681.4,188.4 683.7,198.4 686.3,197.4 687.8,208.9 689.8,221.7 692.4,233.6 693.2,229.4 695.8,226.1" fill="none" stroke="#0000ff" stroke-width="1" shape-rendering="crispEdges"/>
<polyline points="43.5,598.5 45.4,580.5 49.1,569.6 50.4,535.0 51.3,496.0 52.2,478.0 53.0,469.7 54.5,439.2 56.8,416.2 60.6,397.9 63.7,392.5 68.3,388.4 72.1,387.2 75.2,388.4 78.2,388.4 80.1,405.5 81.3,420.8 84.6,439.9 87.4,441.0 88.6,454.5 88.9,478.0 89.4,491.7 91.5,535.0 93.7,561.0 96.3,585.9 98.0,576.1 99.6,556.6 101.7,513.3 103.9,480.8 104.2,478.0 105.0,469.7 106.5,445.3 108.8,423.9 111.6,405.5 114.2,397.1 116.5,394.1 119.5,397.9 124.6,399.4 125.6,407.1 127.2,428.5 127.6,446.8 128.4,470.0 129.9,498.2 132.1,541.5 134.2,567.5 136.4,575.0 137.9,565.3 139.2,539.3 140.7,563.1 144.0,582.6 147.2,594.5 150.5,600.6 153.2,601.9 153.9,593.5 156.1,567.5 158.2,537.1 160.8,509.0 164.1,485.2 165.0,478.0 166.5,454.5 168.3,431.5 170.6,411.6 174.5,396.3 179.4,390.2 182.1,404.0 183.6,423.9 184.9,446.8 186.4,470.0 189.0,496.0 191.2,526.3 194.4,537.1 196.6,548.0 198.7,569.6 202.0,587.0 204.1,594.5 206.3,597.8 208.0,582.6 209.6,556.6 211.7,526.3 213.9,513.3 216.1,491.7 217.0,476.0 218.0,465.2 224.9,443.7 228.7,430.0 231.0,414.7 232.6,410.9 241.7,396.3 246.3,390.2 248.6,402.5 252.4,422.3 254.0,439.2 255.5,457.5 256.0,470.0 257.2,491.7 258.3,524.1 259.4,545.8 260.5,569.6 261.5,556.6 263.7,535.0 267.0,502.5 268.7,480.8 269.6,472.0 270.4,463.6 272.2,447.6 274.5,451.4 278.3,437.6 282.2,426.9 284.5,421.6 286.3,426.9 288.3,442.2 289.2,460.6 289.6,472.0 290.8,491.7 292.5,517.6 294.2,543.6 296.4,567.5 300.1,592.4 304.4,598.9 308.7,603.2 310.9,602.6 313.1,593.5 314.6,567.5 316.7,539.3 318.5,509.0 320.0,480.8 320.9,463.6 321.9,445.3 323.5,428.5 324.5,420.0 326.5,430.0 328.0,442.2 330.3,457.5 333.7,457.5 336.5,452.9 338.0,439.2 339.2,421.3 340.7,442.2 341.8,460.6 342.3,478.0 342.7,491.7 344.0,519.8 345.6,545.8 347.7,569.6 350.5,587.0 353.1,593.5 356.4,587.0 358.5,571.8 360.1,552.3 361.8,519.8 364.0,496.0 365.8,478.0 367.0,460.6 368.9,430.0 370.9,408.6 373.4,399.4 376.1,411.6 377.6,431.5 379.5,451.4 380.4,469.7 380.8,485.2 382.6,513.3 384.7,543.6 386.9,571.8 389.5,587.0 391.2,594.5 394.3,587.6 397.1,591.3 402.1,601.0 407.9,604.7 408.6,587.0 409.4,550.1 410.7,513.3 411.6,485.2 412.3,472.0 412.8,466.7 414.3,442.2 415.9,423.9 418.2,408.6 421.2,397.1 425.0,390.2 431.2,387.5 434.2,391.0 436.5,399.4 438.8,413.2 440.3,421.6 443.4,426.9 448.7,435.3 449.8,446.8 450.5,457.5 450.7,472.0 451.2,496.0 453.4,535.0 455.6,563.1 458.4,578.3 460.5,590.2 463.1,584.8 466.4,595.2 468.6,578.3 470.7,545.8 473.5,513.3 476.1,480.8 477.0,463.6 477.8,448.3 478.6,438.4 478.9,451.4 479.8,465.0 480.9,487.3 482.4,516.0 484.2,546.0 486.5,569.6 489.7,587.0 492.6,595.2 495.2,589.1 498.4,596.7 503.8,602.6 506.4,593.5 508.8,598.9 510.3,587.0 512.1,571.8 514.7,561.0 518.6,552.3 520.1,535.0 521.6,513.3 522.8,491.7 523.5,476.0 524.2,463.6 525.9,436.1 528.6,413.2 530.9,399.4 532.8,395.6 535.0,398.6 537.8,393.3 541.9,389.0 547.3,387.5 548.5,397.9 549.6,416.2 550.6,436.1 551.9,451.4 553.2,469.7 554.7,478.7 556.2,483.0 557.2,476.0 557.7,468.2 558.7,457.5 560.3,439.2 561.8,419.3 563.3,408.6 564.6,403.2 565.6,410.1 567.5,422.3 570.2,418.5 573.3,417.4 574.5,431.5 575.6,454.5 576.0,473.6 576.3,485.0 577.0,502.5 579.6,526.3 582.2,541.5 584.0,561.0 586.1,582.6 589.4,595.6 592.6,601.0 595.9,603.2 597.0,597.8 598.0,574.0 599.1,541.5 600.5,505.0 601.9,478.0 603.2,457.5 605.2,432.7 606.9,416.1 608.2,409.5 611.5,406.2 613.2,414.4 614.8,429.3 616.2,449.2 617.3,467.4 618.5,480.0 619.2,491.6 621.4,524.1 622.9,552.2 625.7,578.2 628.9,590.1 634.3,599.8 637.2,601.5 640.2,596.5 643.0,602.0 648.0,604.5 648.4,589.0 649.5,556.5 651.0,513.3 652.7,483.0 653.5,468.0 653.9,457.5 654.6,448.4 656.2,455.8 657.9,467.4 659.2,478.0 660.3,491.6 662.5,517.6 663.5,529.5 664.6,513.3 666.8,491.6 668.0,476.0 668.7,467.4 670.3,444.2 671.5,422.7 672.8,409.5 675.3,402.8 680.3,395.1 681.9,404.5 684.1,419.4 686.1,432.7 688.0,450.9 689.0,467.4 689.6,480.0 689.9,491.6 691.7,524.1 693.8,552.2 695.6,572.7" fill="none" stroke="#0000ff" stroke-width="1" shape-rendering="crispEdges"/>
<g shape-rendering="crispEdges">
<rect x="138" y="222" width="8" height="3" fill="#000"/><rect x="139" y="223" width="6" height="1" fill="#fff000"/>
<rect x="138" y="227" width="8" height="3" fill="#000"/><rect x="139" y="228" width="6" height="1" fill="#fff000"/>
<rect x="335" y="123" width="8" height="3" fill="#000"/><rect x="336" y="124" width="6" height="1" fill="#0000ff"/>
<rect x="335" y="128" width="8" height="3" fill="#000"/><rect x="336" y="129" width="6" height="1" fill="#0000ff"/>
<rect x="482" y="140" width="8" height="3" fill="#000"/><rect x="483" y="141" width="6" height="1" fill="#fff000"/>
<rect x="482" y="145" width="8" height="3" fill="#000"/><rect x="483" y="146" width="6" height="1" fill="#fff000"/>
<rect x="557" y="156" width="8" height="3" fill="#000"/><rect x="558" y="157" width="6" height="1" fill="#0000ff"/>
<rect x="557" y="161" width="8" height="3" fill="#000"/><rect x="558" y="162" width="6" height="1" fill="#0000ff"/>
<rect x="54" y="417" width="8" height="3" fill="#000"/><rect x="55" y="418" width="6" height="1" fill="#0000ff"/>
<rect x="54" y="422" width="8" height="3" fill="#000"/><rect x="55" y="423" width="6" height="1" fill="#0000ff"/>
<rect x="106" y="420" width="8" height="3" fill="#000"/><rect x="107" y="421" width="6" height="1" fill="#0000ff"/>
<rect x="106" y="425" width="8" height="3" fill="#000"/><rect x="107" y="426" width="6" height="1" fill="#0000ff"/>
<rect x="167" y="418" width="8" height="3" fill="#000"/><rect x="168" y="419" width="6" height="1" fill="#0000ff"/>
<rect x="167" y="423" width="8" height="3" fill="#000"/><rect x="168" y="424" width="6" height="1" fill="#0000ff"/>
<rect x="225" y="436" width="8" height="3" fill="#000"/><rect x="226" y="437" width="6" height="1" fill="#0000ff"/>
<rect x="225" y="441" width="8" height="3" fill="#000"/><rect x="226" y="442" width="6" height="1" fill="#0000ff"/>
<rect x="280" y="429" width="8" height="3" fill="#000"/><rect x="281" y="430" width="6" height="1" fill="#0000ff"/>
<rect x="280" y="434" width="8" height="3" fill="#000"/><rect x="281" y="435" width="6" height="1" fill="#0000ff"/>
<rect x="320" y="429" width="8" height="3" fill="#000"/><rect x="321" y="430" width="6" height="1" fill="#0000ff"/>
<rect x="320" y="434" width="8" height="3" fill="#000"/><rect x="321" y="435" width="6" height="1" fill="#0000ff"/>
<rect x="335" y="429" width="8" height="3" fill="#000"/><rect x="336" y="430" width="6" height="1" fill="#0000ff"/>
<rect x="335" y="434" width="8" height="3" fill="#000"/><rect x="336" y="435" width="6" height="1" fill="#0000ff"/>
<rect x="366" y="420" width="8" height="3" fill="#000"/><rect x="367" y="421" width="6" height="1" fill="#0000ff"/>
<rect x="366" y="425" width="8" height="3" fill="#000"/><rect x="367" y="426" width="6" height="1" fill="#0000ff"/>
<rect x="413" y="422" width="8" height="3" fill="#000"/><rect x="414" y="423" width="6" height="1" fill="#0000ff"/>
<rect x="413" y="427" width="8" height="3" fill="#000"/><rect x="414" y="428" width="6" height="1" fill="#0000ff"/>
<rect x="523" y="429" width="8" height="3" fill="#000"/><rect x="524" y="430" width="6" height="1" fill="#0000ff"/>
<rect x="523" y="434" width="8" height="3" fill="#000"/><rect x="524" y="435" width="6" height="1" fill="#0000ff"/>
<rect x="557" y="429" width="8" height="3" fill="#000"/><rect x="558" y="430" width="6" height="1" fill="#0000ff"/>
<rect x="557" y="434" width="8" height="3" fill="#000"/><rect x="558" y="435" width="6" height="1" fill="#0000ff"/>
<rect x="604" y="417" width="8" height="3" fill="#000"/><rect x="605" y="418" width="6" height="1" fill="#0000ff"/>
<rect x="604" y="422" width="8" height="3" fill="#000"/><rect x="605" y="423" width="6" height="1" fill="#0000ff"/>
<rect x="667" y="431" width="8" height="3" fill="#000"/><rect x="668" y="432" width="6" height="1" fill="#0000ff"/>
<rect x="667" y="436" width="8" height="3" fill="#000"/><rect x="668" y="437" width="6" height="1" fill="#0000ff"/>
<rect x="89" y="548" width="8" height="3" fill="#000"/><rect x="90" y="549" width="6" height="1" fill="#fff000"/>
<rect x="89" y="553" width="8" height="3" fill="#000"/><rect x="90" y="554" width="6" height="1" fill="#fff000"/>
<rect x="129" y="546" width="8" height="3" fill="#000"/><rect x="130" y="547" width="6" height="1" fill="#fff000"/>
<rect x="129" y="551" width="8" height="3" fill="#000"/><rect x="130" y="552" width="6" height="1" fill="#fff000"/>
<rect x="138" y="556" width="8" height="3" fill="#000"/><rect x="139" y="557" width="6" height="1" fill="#fff000"/>
<rect x="138" y="561" width="8" height="3" fill="#000"/><rect x="139" y="562" width="6" height="1" fill="#fff000"/>
<rect x="196" y="562" width="8" height="3" fill="#000"/><rect x="197" y="563" width="6" height="1" fill="#fff000"/>
<rect x="196" y="567" width="8" height="3" fill="#000"/><rect x="197" y="568" width="6" height="1" fill="#fff000"/>
<rect x="256" y="553" width="8" height="3" fill="#000"/><rect x="257" y="554" width="6" height="1" fill="#fff000"/>
<rect x="256" y="558" width="8" height="3" fill="#000"/><rect x="257" y="559" width="6" height="1" fill="#fff000"/>
<rect x="291" y="548" width="8" height="3" fill="#000"/><rect x="292" y="549" width="6" height="1" fill="#fff000"/>
<rect x="291" y="553" width="8" height="3" fill="#000"/><rect x="292" y="554" width="6" height="1" fill="#fff000"/>
<rect x="343" y="555" width="8" height="3" fill="#000"/><rect x="344" y="556" width="6" height="1" fill="#fff000"/>
<rect x="343" y="560" width="8" height="3" fill="#000"/><rect x="344" y="561" width="6" height="1" fill="#fff000"/>
<rect x="381" y="546" width="8" height="3" fill="#000"/><rect x="382" y="547" width="6" height="1" fill="#fff000"/>
<rect x="381" y="551" width="8" height="3" fill="#000"/><rect x="382" y="552" width="6" height="1" fill="#fff000"/>
<rect x="453" y="560" width="8" height="3" fill="#000"/><rect x="454" y="561" width="6" height="1" fill="#fff000"/>
<rect x="453" y="565" width="8" height="3" fill="#000"/><rect x="454" y="566" width="6" height="1" fill="#fff000"/>
<rect x="482" y="560" width="8" height="3" fill="#000"/><rect x="483" y="561" width="6" height="1" fill="#fff000"/>
<rect x="482" y="565" width="8" height="3" fill="#000"/><rect x="483" y="566" width="6" height="1" fill="#fff000"/>
<rect x="581" y="557" width="8" height="3" fill="#000"/><rect x="582" y="558" width="6" height="1" fill="#fff000"/>
<rect x="581" y="562" width="8" height="3" fill="#000"/><rect x="582" y="563" width="6" height="1" fill="#fff000"/>
<rect x="621" y="560" width="8" height="3" fill="#000"/><rect x="622" y="561" width="6" height="1" fill="#fff000"/>
<rect x="621" y="565" width="8" height="3" fill="#000"/><rect x="622" y="566" width="6" height="1" fill="#fff000"/>
<rect x="691" y="557" width="8" height="3" fill="#000"/><rect x="692" y="558" width="6" height="1" fill="#fff000"/>
<rect x="691" y="562" width="8" height="3" fill="#000"/><rect x="692" y="563" width="6" height="1" fill="#fff000"/>
<path d="M47 320h10v1h-10zM48 319h9v1h-9zM48 318h8v1h-8zM49 317h7v1h-7zM49 316h6v1h-6zM50 315h5v1h-5zM50 314h4v1h-4zM51 313h3v1h-3zM51 312h2v1h-2z" fill="#000"/>
<path d="M48 320h8v1h-8zM49 319h7v1h-7zM49 318h6v1h-6zM50 317h5v1h-5zM50 316h4v1h-4zM51 315h3v1h-3zM51 314h2v1h-2zM52 313h1v1h-1z" fill="#12ac12"/>
<path d="M47 321h11v1h-11zM52 311h1v1h-1z" fill="#000"/>
<path d="M96 276h10v1h-10zM97 275h9v1h-9zM97 274h8v1h-8zM98 273h7v1h-7zM98 272h6v1h-6zM99 271h5v1h-5zM99 270h4v1h-4zM100 269h3v1h-3zM100 268h2v1h-2z" fill="#000"/>
<path d="M97 276h8v1h-8zM98 275h7v1h-7zM98 274h6v1h-6zM99 273h5v1h-5zM99 272h4v1h-4zM100 271h3v1h-3zM100 270h2v1h-2zM101 269h1v1h-1z" fill="#12ac12"/>
<path d="M96 277h11v1h-11zM101 267h1v1h-1z" fill="#000"/>
<path d="M134 220h10v1h-10zM135 219h9v1h-9zM135 218h8v1h-8zM136 217h7v1h-7zM136 216h6v1h-6zM137 215h5v1h-5zM137 214h4v1h-4zM138 213h3v1h-3zM138 212h2v1h-2z" fill="#000"/>
<path d="M135 220h8v1h-8zM136 219h7v1h-7zM136 218h6v1h-6zM137 217h5v1h-5zM137 216h4v1h-4zM138 215h3v1h-3zM138 214h2v1h-2zM139 213h1v1h-1z" fill="#12ac12"/>
<path d="M134 221h11v1h-11zM139 211h1v1h-1z" fill="#000"/>
<path d="M154 238h10v1h-10zM155 237h9v1h-9zM155 236h8v1h-8zM156 235h7v1h-7zM156 234h6v1h-6zM157 233h5v1h-5zM157 232h4v1h-4zM158 231h3v1h-3zM158 230h2v1h-2z" fill="#000"/>
<path d="M155 238h8v1h-8zM156 237h7v1h-7zM156 236h6v1h-6zM157 235h5v1h-5zM157 234h4v1h-4zM158 233h3v1h-3zM158 232h2v1h-2zM159 231h1v1h-1z" fill="#12ac12"/>
<path d="M154 239h11v1h-11zM159 229h1v1h-1z" fill="#000"/>
<path d="M206 195h10v1h-10zM207 194h9v1h-9zM207 193h8v1h-8zM208 192h7v1h-7zM208 191h6v1h-6zM209 190h5v1h-5zM209 189h4v1h-4zM210 188h3v1h-3zM210 187h2v1h-2z" fill="#000"/>
<path d="M207 195h8v1h-8zM208 194h7v1h-7zM208 193h6v1h-6zM209 192h5v1h-5zM209 191h4v1h-4zM210 190h3v1h-3zM210 189h2v1h-2zM211 188h1v1h-1z" fill="#12ac12"/>
<path d="M206 196h11v1h-11zM211 186h1v1h-1z" fill="#000"/>
<path d="M258 154h10v1h-10zM259 153h9v1h-9zM259 152h8v1h-8zM260 151h7v1h-7zM260 150h6v1h-6zM261 149h5v1h-5zM261 148h4v1h-4zM262 147h3v1h-3zM262 146h2v1h-2z" fill="#000"/>
<path d="M259 154h8v1h-8zM260 153h7v1h-7zM260 152h6v1h-6zM261 151h5v1h-5zM261 150h4v1h-4zM262 149h3v1h-3zM262 148h2v1h-2zM263 147h1v1h-1z" fill="#12ac12"/>
<path d="M258 155h11v1h-11zM263 145h1v1h-1z" fill="#000"/>
<path d="M313 139h10v1h-10zM314 138h9v1h-9zM314 137h8v1h-8zM315 136h7v1h-7zM315 135h6v1h-6zM316 134h5v1h-5zM316 133h4v1h-4zM317 132h3v1h-3zM317 131h2v1h-2z" fill="#000"/>
<path d="M314 139h8v1h-8zM315 138h7v1h-7zM315 137h6v1h-6zM316 136h5v1h-5zM316 135h4v1h-4zM317 134h3v1h-3zM317 133h2v1h-2zM318 132h1v1h-1z" fill="#12ac12"/>
<path d="M313 140h11v1h-11zM318 130h1v1h-1z" fill="#000"/>
<path d="M357 142h10v1h-10zM358 141h9v1h-9zM358 140h8v1h-8zM359 139h7v1h-7zM359 138h6v1h-6zM360 137h5v1h-5zM360 136h4v1h-4zM361 135h3v1h-3zM361 134h2v1h-2z" fill="#000"/>
<path d="M358 142h8v1h-8zM359 141h7v1h-7zM359 140h6v1h-6zM360 139h5v1h-5zM360 138h4v1h-4zM361 137h3v1h-3zM361 136h2v1h-2zM362 135h1v1h-1z" fill="#12ac12"/>
<path d="M357 143h11v1h-11zM362 133h1v1h-1z" fill="#000"/>
<path d="M406 218h10v1h-10zM407 217h9v1h-9zM407 216h8v1h-8zM408 215h7v1h-7zM408 214h6v1h-6zM409 213h5v1h-5zM409 212h4v1h-4zM410 211h3v1h-3zM410 210h2v1h-2z" fill="#000"/>
<path d="M407 218h8v1h-8zM408 217h7v1h-7zM408 216h6v1h-6zM409 215h5v1h-5zM409 214h4v1h-4zM410 213h3v1h-3zM410 212h2v1h-2zM411 211h1v1h-1z" fill="#12ac12"/>
<path d="M406 219h11v1h-11zM411 209h1v1h-1z" fill="#000"/>
<path d="M467 141h10v1h-10zM468 140h9v1h-9zM468 139h8v1h-8zM469 138h7v1h-7zM469 137h6v1h-6zM470 136h5v1h-5zM470 135h4v1h-4zM471 134h3v1h-3zM471 133h2v1h-2z" fill="#000"/>
<path d="M468 141h8v1h-8zM469 140h7v1h-7zM469 139h6v1h-6zM470 138h5v1h-5zM470 137h4v1h-4zM471 136h3v1h-3zM471 135h2v1h-2zM472 134h1v1h-1z" fill="#12ac12"/>
<path d="M467 142h11v1h-11zM472 132h1v1h-1z" fill="#000"/>
<path d="M510 220h10v1h-10zM511 219h9v1h-9zM511 218h8v1h-8zM512 217h7v1h-7zM512 216h6v1h-6zM513 215h5v1h-5zM513 214h4v1h-4zM514 213h3v1h-3zM514 212h2v1h-2z" fill="#000"/>
<path d="M511 220h8v1h-8zM512 219h7v1h-7zM512 218h6v1h-6zM513 217h5v1h-5zM513 216h4v1h-4zM514 215h3v1h-3zM514 214h2v1h-2zM515 213h1v1h-1z" fill="#12ac12"/>
<path d="M510 221h11v1h-11zM515 211h1v1h-1z" fill="#000"/>
<path d="M594 166h10v1h-10zM595 165h9v1h-9zM595 164h8v1h-8zM596 163h7v1h-7zM596 162h6v1h-6zM597 161h5v1h-5zM597 160h4v1h-4zM598 159h3v1h-3zM598 158h2v1h-2z" fill="#000"/>
<path d="M595 166h8v1h-8zM596 165h7v1h-7zM596 164h6v1h-6zM597 163h5v1h-5zM597 162h4v1h-4zM598 161h3v1h-3zM598 160h2v1h-2zM599 159h1v1h-1z" fill="#12ac12"/>
<path d="M594 167h11v1h-11zM599 157h1v1h-1z" fill="#000"/>
<path d="M646 211h10v1h-10zM647 210h9v1h-9zM647 209h8v1h-8zM648 208h7v1h-7zM648 207h6v1h-6zM649 206h5v1h-5zM649 205h4v1h-4zM650 204h3v1h-3zM650 203h2v1h-2z" fill="#000"/>
<path d="M647 211h8v1h-8zM648 210h7v1h-7zM648 209h6v1h-6zM649 208h5v1h-5zM649 207h4v1h-4zM650 206h3v1h-3zM650 205h2v1h-2zM651 204h1v1h-1z" fill="#12ac12"/>
<path d="M646 212h11v1h-11zM651 202h1v1h-1z" fill="#000"/>
<path d="M47 494h10v1h-10zM48 493h9v1h-9zM48 492h8v1h-8zM49 491h7v1h-7zM49 490h6v1h-6zM50 489h5v1h-5zM50 488h4v1h-4zM51 487h3v1h-3zM51 486h2v1h-2z" fill="#000"/>
<path d="M48 494h8v1h-8zM49 493h7v1h-7zM49 492h6v1h-6zM50 491h5v1h-5zM50 490h4v1h-4zM51 489h3v1h-3zM51 488h2v1h-2zM52 487h1v1h-1z" fill="#12ac12"/>
<path d="M47 495h11v1h-11zM52 485h1v1h-1z" fill="#000"/>
<path d="M96 546h10v1h-10zM97 545h9v1h-9zM97 544h8v1h-8zM98 543h7v1h-7zM98 542h6v1h-6zM99 541h5v1h-5zM99 540h4v1h-4zM100 539h3v1h-3zM100 538h2v1h-2z" fill="#000"/>
<path d="M97 546h8v1h-8zM98 545h7v1h-7zM98 544h6v1h-6zM99 543h5v1h-5zM99 542h4v1h-4zM100 541h3v1h-3zM100 540h2v1h-2zM101 539h1v1h-1z" fill="#12ac12"/>
<path d="M96 547h11v1h-11zM101 537h1v1h-1z" fill="#000"/>
<path d="M134 555h10v1h-10zM135 554h9v1h-9zM135 553h8v1h-8zM136 552h7v1h-7zM136 551h6v1h-6zM137 550h5v1h-5zM137 549h4v1h-4zM138 548h3v1h-3zM138 547h2v1h-2z" fill="#000"/>
<path d="M135 555h8v1h-8zM136 554h7v1h-7zM136 553h6v1h-6zM137 552h5v1h-5zM137 551h4v1h-4zM138 550h3v1h-3zM138 549h2v1h-2zM139 548h1v1h-1z" fill="#12ac12"/>
<path d="M134 556h11v1h-11zM139 546h1v1h-1z" fill="#000"/>
<path d="M154 540h10v1h-10zM155 539h9v1h-9zM155 538h8v1h-8zM156 537h7v1h-7zM156 536h6v1h-6zM157 535h5v1h-5zM157 534h4v1h-4zM158 533h3v1h-3zM158 532h2v1h-2z" fill="#000"/>
<path d="M155 540h8v1h-8zM156 539h7v1h-7zM156 538h6v1h-6zM157 537h5v1h-5zM157 536h4v1h-4zM158 535h3v1h-3zM158 534h2v1h-2zM159 533h1v1h-1z" fill="#12ac12"/>
<path d="M154 541h11v1h-11zM159 531h1v1h-1z" fill="#000"/>
<path d="M206 541h10v1h-10zM207 540h9v1h-9zM207 539h8v1h-8zM208 538h7v1h-7zM208 537h6v1h-6zM209 536h5v1h-5zM209 535h4v1h-4zM210 534h3v1h-3zM210 533h2v1h-2z" fill="#000"/>
<path d="M207 541h8v1h-8zM208 540h7v1h-7zM208 539h6v1h-6zM209 538h5v1h-5zM209 537h4v1h-4zM210 536h3v1h-3zM210 535h2v1h-2zM211 534h1v1h-1z" fill="#12ac12"/>
<path d="M206 542h11v1h-11zM211 532h1v1h-1z" fill="#000"/>
<path d="M258 564h10v1h-10zM259 563h9v1h-9zM259 562h8v1h-8zM260 561h7v1h-7zM260 560h6v1h-6zM261 559h5v1h-5zM261 558h4v1h-4zM262 557h3v1h-3zM262 556h2v1h-2z" fill="#000"/>
<path d="M259 564h8v1h-8zM260 563h7v1h-7zM260 562h6v1h-6zM261 561h5v1h-5zM261 560h4v1h-4zM262 559h3v1h-3zM262 558h2v1h-2zM263 557h1v1h-1z" fill="#12ac12"/>
<path d="M258 565h11v1h-11zM263 555h1v1h-1z" fill="#000"/>
<path d="M313 536h10v1h-10zM314 535h9v1h-9zM314 534h8v1h-8zM315 533h7v1h-7zM315 532h6v1h-6zM316 531h5v1h-5zM316 530h4v1h-4zM317 529h3v1h-3zM317 528h2v1h-2z" fill="#000"/>
<path d="M314 536h8v1h-8zM315 535h7v1h-7zM315 534h6v1h-6zM316 533h5v1h-5zM316 532h4v1h-4zM317 531h3v1h-3zM317 530h2v1h-2zM318 529h1v1h-1z" fill="#12ac12"/>
<path d="M313 537h11v1h-11zM318 527h1v1h-1z" fill="#000"/>
<path d="M357 530h10v1h-10zM358 529h9v1h-9zM358 528h8v1h-8zM359 527h7v1h-7zM359 526h6v1h-6zM360 525h5v1h-5zM360 524h4v1h-4zM361 523h3v1h-3zM361 522h2v1h-2z" fill="#000"/>
<path d="M358 530h8v1h-8zM359 529h7v1h-7zM359 528h6v1h-6zM360 527h5v1h-5zM360 526h4v1h-4zM361 525h3v1h-3zM361 524h2v1h-2zM362 523h1v1h-1z" fill="#12ac12"/>
<path d="M357 531h11v1h-11zM362 521h1v1h-1z" fill="#000"/>
<path d="M406 511h10v1h-10zM407 510h9v1h-9zM407 509h8v1h-8zM408 508h7v1h-7zM408 507h6v1h-6zM409 506h5v1h-5zM409 505h4v1h-4zM410 504h3v1h-3zM410 503h2v1h-2z" fill="#000"/>
<path d="M407 511h8v1h-8zM408 510h7v1h-7zM408 509h6v1h-6zM409 508h5v1h-5zM409 507h4v1h-4zM410 506h3v1h-3zM410 505h2v1h-2zM411 504h1v1h-1z" fill="#12ac12"/>
<path d="M406 512h11v1h-11zM411 502h1v1h-1z" fill="#000"/>
<path d="M467 544h10v1h-10zM468 543h9v1h-9zM468 542h8v1h-8zM469 541h7v1h-7zM469 540h6v1h-6zM470 539h5v1h-5zM470 538h4v1h-4zM471 537h3v1h-3zM471 536h2v1h-2z" fill="#000"/>
<path d="M468 544h8v1h-8zM469 543h7v1h-7zM469 542h6v1h-6zM470 541h5v1h-5zM470 540h4v1h-4zM471 539h3v1h-3zM471 538h2v1h-2zM472 537h1v1h-1z" fill="#12ac12"/>
<path d="M467 545h11v1h-11zM472 535h1v1h-1z" fill="#000"/>
<path d="M510 575h10v1h-10zM511 574h9v1h-9zM511 573h8v1h-8zM512 572h7v1h-7zM512 571h6v1h-6zM513 570h5v1h-5zM513 569h4v1h-4zM514 568h3v1h-3zM514 567h2v1h-2z" fill="#000"/>
<path d="M511 575h8v1h-8zM512 574h7v1h-7zM512 573h6v1h-6zM513 572h5v1h-5zM513 571h4v1h-4zM514 570h3v1h-3zM514 569h2v1h-2zM515 568h1v1h-1z" fill="#12ac12"/>
<path d="M510 576h11v1h-11zM515 566h1v1h-1z" fill="#000"/>
<path d="M594 570h10v1h-10zM595 569h9v1h-9zM595 568h8v1h-8zM596 567h7v1h-7zM596 566h6v1h-6zM597 565h5v1h-5zM597 564h4v1h-4zM598 563h3v1h-3zM598 562h2v1h-2z" fill="#000"/>
<path d="M595 570h8v1h-8zM596 569h7v1h-7zM596 568h6v1h-6zM597 567h5v1h-5zM597 566h4v1h-4zM598 565h3v1h-3zM598 564h2v1h-2zM599 563h1v1h-1z" fill="#12ac12"/>
<path d="M594 571h11v1h-11zM599 561h1v1h-1z" fill="#000"/>
<path d="M646 525h10v1h-10zM647 524h9v1h-9zM647 523h8v1h-8zM648 522h7v1h-7zM648 521h6v1h-6zM649 520h5v1h-5zM649 519h4v1h-4zM650 518h3v1h-3zM650 517h2v1h-2z" fill="#000"/>
<path d="M647 525h8v1h-8zM648 524h7v1h-7zM648 523h6v1h-6zM649 522h5v1h-5zM649 521h4v1h-4zM650 520h3v1h-3zM650 519h2v1h-2zM651 518h1v1h-1z" fill="#12ac12"/>
<path d="M646 526h11v1h-11zM651 516h1v1h-1z" fill="#000"/>
<path d="M79 252h10v1h-10zM80 253h9v1h-9zM80 254h8v1h-8zM81 255h7v1h-7zM81 256h6v1h-6zM82 257h5v1h-5zM82 258h4v1h-4zM83 259h3v1h-3zM83 260h2v1h-2z" fill="#000"/>
<path d="M80 252h8v1h-8zM81 253h7v1h-7zM81 254h6v1h-6zM82 255h5v1h-5zM82 256h4v1h-4zM83 257h3v1h-3zM83 258h2v1h-2zM84 259h1v1h-1z" fill="#e00000"/>
<path d="M79 251h11v1h-11zM84 261h1v1h-1z" fill="#000"/>
<path d="M122 203h10v1h-10zM123 204h9v1h-9zM123 205h8v1h-8zM124 206h7v1h-7zM124 207h6v1h-6zM125 208h5v1h-5zM125 209h4v1h-4zM126 210h3v1h-3zM126 211h2v1h-2z" fill="#000"/>
<path d="M123 203h8v1h-8zM124 204h7v1h-7zM124 205h6v1h-6zM125 206h5v1h-5zM125 207h4v1h-4zM126 208h3v1h-3zM126 209h2v1h-2zM127 210h1v1h-1z" fill="#e00000"/>
<path d="M122 202h11v1h-11zM127 212h1v1h-1z" fill="#000"/>
<path d="M180 187h10v1h-10zM181 188h9v1h-9zM181 189h8v1h-8zM182 190h7v1h-7zM182 191h6v1h-6zM183 192h5v1h-5zM183 193h4v1h-4zM184 194h3v1h-3zM184 195h2v1h-2z" fill="#000"/>
<path d="M181 187h8v1h-8zM182 188h7v1h-7zM182 189h6v1h-6zM183 190h5v1h-5zM183 191h4v1h-4zM184 192h3v1h-3zM184 193h2v1h-2zM185 194h1v1h-1z" fill="#e00000"/>
<path d="M180 186h11v1h-11zM185 196h1v1h-1z" fill="#000"/>
<path d="M250 132h10v1h-10zM251 133h9v1h-9zM251 134h8v1h-8zM252 135h7v1h-7zM252 136h6v1h-6zM253 137h5v1h-5zM253 138h4v1h-4zM254 139h3v1h-3zM254 140h2v1h-2z" fill="#000"/>
<path d="M251 132h8v1h-8zM252 133h7v1h-7zM252 134h6v1h-6zM253 135h5v1h-5zM253 136h4v1h-4zM254 137h3v1h-3zM254 138h2v1h-2zM255 139h1v1h-1z" fill="#e00000"/>
<path d="M250 131h11v1h-11zM255 141h1v1h-1z" fill="#000"/>
<path d="M282 103h10v1h-10zM283 104h9v1h-9zM283 105h8v1h-8zM284 106h7v1h-7zM284 107h6v1h-6zM285 108h5v1h-5zM285 109h4v1h-4zM286 110h3v1h-3zM286 111h2v1h-2z" fill="#000"/>
<path d="M283 103h8v1h-8zM284 104h7v1h-7zM284 105h6v1h-6zM285 106h5v1h-5zM285 107h4v1h-4zM286 108h3v1h-3zM286 109h2v1h-2zM287 110h1v1h-1z" fill="#e00000"/>
<path d="M282 102h11v1h-11zM287 112h1v1h-1z" fill="#000"/>
<path d="M322 121h10v1h-10zM323 122h9v1h-9zM323 123h8v1h-8zM324 124h7v1h-7zM324 125h6v1h-6zM325 126h5v1h-5zM325 127h4v1h-4zM326 128h3v1h-3zM326 129h2v1h-2z" fill="#000"/>
<path d="M323 121h8v1h-8zM324 122h7v1h-7zM324 123h6v1h-6zM325 124h5v1h-5zM325 125h4v1h-4zM326 126h3v1h-3zM326 127h2v1h-2zM327 128h1v1h-1z" fill="#e00000"/>
<path d="M322 120h11v1h-11zM327 130h1v1h-1z" fill="#000"/>
<path d="M337 117h10v1h-10zM338 118h9v1h-9zM338 119h8v1h-8zM339 120h7v1h-7zM339 121h6v1h-6zM340 122h5v1h-5zM340 123h4v1h-4zM341 124h3v1h-3zM341 125h2v1h-2z" fill="#000"/>
<path d="M338 117h8v1h-8zM339 118h7v1h-7zM339 119h6v1h-6zM340 120h5v1h-5zM340 121h4v1h-4zM341 122h3v1h-3zM341 123h2v1h-2zM342 124h1v1h-1z" fill="#e00000"/>
<path d="M337 116h11v1h-11zM342 126h1v1h-1z" fill="#000"/>
<path d="M374 125h10v1h-10zM375 126h9v1h-9zM375 127h8v1h-8zM376 128h7v1h-7zM376 129h6v1h-6zM377 130h5v1h-5zM377 131h4v1h-4zM378 132h3v1h-3zM378 133h2v1h-2z" fill="#000"/>
<path d="M375 125h8v1h-8zM376 126h7v1h-7zM376 127h6v1h-6zM377 128h5v1h-5zM377 129h4v1h-4zM378 130h3v1h-3zM378 131h2v1h-2zM379 132h1v1h-1z" fill="#e00000"/>
<path d="M374 124h11v1h-11zM379 134h1v1h-1z" fill="#000"/>
<path d="M444 118h10v1h-10zM445 119h9v1h-9zM445 120h8v1h-8zM446 121h7v1h-7zM446 122h6v1h-6zM447 123h5v1h-5zM447 124h4v1h-4zM448 125h3v1h-3zM448 126h2v1h-2z" fill="#000"/>
<path d="M445 118h8v1h-8zM446 119h7v1h-7zM446 120h6v1h-6zM447 121h5v1h-5zM447 122h4v1h-4zM448 123h3v1h-3zM448 124h2v1h-2zM449 125h1v1h-1z" fill="#e00000"/>
<path d="M444 117h11v1h-11zM449 127h1v1h-1z" fill="#000"/>
<path d="M545 172h10v1h-10zM546 173h9v1h-9zM546 174h8v1h-8zM547 175h7v1h-7zM547 176h6v1h-6zM548 177h5v1h-5zM548 178h4v1h-4zM549 179h3v1h-3zM549 180h2v1h-2z" fill="#000"/>
<path d="M546 172h8v1h-8zM547 173h7v1h-7zM547 174h6v1h-6zM548 175h5v1h-5zM548 176h4v1h-4zM549 177h3v1h-3zM549 178h2v1h-2zM550 179h1v1h-1z" fill="#e00000"/>
<path d="M545 171h11v1h-11zM550 181h1v1h-1z" fill="#000"/>
<path d="M571 150h10v1h-10zM572 151h9v1h-9zM572 152h8v1h-8zM573 153h7v1h-7zM573 154h6v1h-6zM574 155h5v1h-5zM574 156h4v1h-4zM575 157h3v1h-3zM575 158h2v1h-2z" fill="#000"/>
<path d="M572 150h8v1h-8zM573 151h7v1h-7zM573 152h6v1h-6zM574 153h5v1h-5zM574 154h4v1h-4zM575 155h3v1h-3zM575 156h2v1h-2zM576 157h1v1h-1z" fill="#e00000"/>
<path d="M571 149h11v1h-11zM576 159h1v1h-1z" fill="#000"/>
<path d="M611 137h10v1h-10zM612 138h9v1h-9zM612 139h8v1h-8zM613 140h7v1h-7zM613 141h6v1h-6zM614 142h5v1h-5zM614 143h4v1h-4zM615 144h3v1h-3zM615 145h2v1h-2z" fill="#000"/>
<path d="M612 137h8v1h-8zM613 138h7v1h-7zM613 139h6v1h-6zM614 140h5v1h-5zM614 141h4v1h-4zM615 142h3v1h-3zM615 143h2v1h-2zM616 144h1v1h-1z" fill="#e00000"/>
<path d="M611 136h11v1h-11zM616 146h1v1h-1z" fill="#000"/>
<path d="M681 181h10v1h-10zM682 182h9v1h-9zM682 183h8v1h-8zM683 184h7v1h-7zM683 185h6v1h-6zM684 186h5v1h-5zM684 187h4v1h-4zM685 188h3v1h-3zM685 189h2v1h-2z" fill="#000"/>
<path d="M682 181h8v1h-8zM683 182h7v1h-7zM683 183h6v1h-6zM684 184h5v1h-5zM684 185h4v1h-4zM685 186h3v1h-3zM685 187h2v1h-2zM686 188h1v1h-1z" fill="#e00000"/>
<path d="M681 180h11v1h-11zM686 190h1v1h-1z" fill="#000"/>
<path d="M79 423h10v1h-10zM80 424h9v1h-9zM80 425h8v1h-8zM81 426h7v1h-7zM81 427h6v1h-6zM82 428h5v1h-5zM82 429h4v1h-4zM83 430h3v1h-3zM83 431h2v1h-2z" fill="#000"/>
<path d="M80 423h8v1h-8zM81 424h7v1h-7zM81 425h6v1h-6zM82 426h5v1h-5zM82 427h4v1h-4zM83 428h3v1h-3zM83 429h2v1h-2zM84 430h1v1h-1z" fill="#e00000"/>
<path d="M79 422h11v1h-11zM84 432h1v1h-1z" fill="#000"/>
<path d="M122 418h10v1h-10zM123 419h9v1h-9zM123 420h8v1h-8zM124 421h7v1h-7zM124 422h6v1h-6zM125 423h5v1h-5zM125 424h4v1h-4zM126 425h3v1h-3zM126 426h2v1h-2z" fill="#000"/>
<path d="M123 418h8v1h-8zM124 419h7v1h-7zM124 420h6v1h-6zM125 421h5v1h-5zM125 422h4v1h-4zM126 423h3v1h-3zM126 424h2v1h-2zM127 425h1v1h-1z" fill="#e00000"/>
<path d="M122 417h11v1h-11zM127 427h1v1h-1z" fill="#000"/>
<path d="M180 446h10v1h-10zM181 447h9v1h-9zM181 448h8v1h-8zM182 449h7v1h-7zM182 450h6v1h-6zM183 451h5v1h-5zM183 452h4v1h-4zM184 453h3v1h-3zM184 454h2v1h-2z" fill="#000"/>
<path d="M181 446h8v1h-8zM182 447h7v1h-7zM182 448h6v1h-6zM183 449h5v1h-5zM183 450h4v1h-4zM184 451h3v1h-3zM184 452h2v1h-2zM185 453h1v1h-1z" fill="#e00000"/>
<path d="M180 445h11v1h-11zM185 455h1v1h-1z" fill="#000"/>
<path d="M250 443h10v1h-10zM251 444h9v1h-9zM251 445h8v1h-8zM252 446h7v1h-7zM252 447h6v1h-6zM253 448h5v1h-5zM253 449h4v1h-4zM254 450h3v1h-3zM254 451h2v1h-2z" fill="#000"/>
<path d="M251 443h8v1h-8zM252 444h7v1h-7zM252 445h6v1h-6zM253 446h5v1h-5zM253 447h4v1h-4zM254 448h3v1h-3zM254 449h2v1h-2zM255 450h1v1h-1z" fill="#e00000"/>
<path d="M250 442h11v1h-11zM255 452h1v1h-1z" fill="#000"/>
<path d="M282 416h10v1h-10zM283 417h9v1h-9zM283 418h8v1h-8zM284 419h7v1h-7zM284 420h6v1h-6zM285 421h5v1h-5zM285 422h4v1h-4zM286 423h3v1h-3zM286 424h2v1h-2z" fill="#000"/>
<path d="M283 416h8v1h-8zM284 417h7v1h-7zM284 418h6v1h-6zM285 419h5v1h-5zM285 420h4v1h-4zM286 421h3v1h-3zM286 422h2v1h-2zM287 423h1v1h-1z" fill="#e00000"/>
<path d="M282 415h11v1h-11zM287 425h1v1h-1z" fill="#000"/>
<path d="M322 422h10v1h-10zM323 423h9v1h-9zM323 424h8v1h-8zM324 425h7v1h-7zM324 426h6v1h-6zM325 427h5v1h-5zM325 428h4v1h-4zM326 429h3v1h-3zM326 430h2v1h-2z" fill="#000"/>
<path d="M323 422h8v1h-8zM324 423h7v1h-7zM324 424h6v1h-6zM325 425h5v1h-5zM325 426h4v1h-4zM326 427h3v1h-3zM326 428h2v1h-2zM327 429h1v1h-1z" fill="#e00000"/>
<path d="M322 421h11v1h-11zM327 431h1v1h-1z" fill="#000"/>
<path d="M337 451h10v1h-10zM338 452h9v1h-9zM338 453h8v1h-8zM339 454h7v1h-7zM339 455h6v1h-6zM340 456h5v1h-5zM340 457h4v1h-4zM341 458h3v1h-3zM341 459h2v1h-2z" fill="#000"/>
<path d="M338 451h8v1h-8zM339 452h7v1h-7zM339 453h6v1h-6zM340 454h5v1h-5zM340 455h4v1h-4zM341 456h3v1h-3zM341 457h2v1h-2zM342 458h1v1h-1z" fill="#e00000"/>
<path d="M337 450h11v1h-11zM342 460h1v1h-1z" fill="#000"/>
<path d="M374 437h10v1h-10zM375 438h9v1h-9zM375 439h8v1h-8zM376 440h7v1h-7zM376 441h6v1h-6zM377 442h5v1h-5zM377 443h4v1h-4zM378 444h3v1h-3zM378 445h2v1h-2z" fill="#000"/>
<path d="M375 437h8v1h-8zM376 438h7v1h-7zM376 439h6v1h-6zM377 440h5v1h-5zM377 441h4v1h-4zM378 442h3v1h-3zM378 443h2v1h-2zM379 444h1v1h-1z" fill="#e00000"/>
<path d="M374 436h11v1h-11zM379 446h1v1h-1z" fill="#000"/>
<path d="M444 420h10v1h-10zM445 421h9v1h-9zM445 422h8v1h-8zM446 423h7v1h-7zM446 424h6v1h-6zM447 425h5v1h-5zM447 426h4v1h-4zM448 427h3v1h-3zM448 428h2v1h-2z" fill="#000"/>
<path d="M445 420h8v1h-8zM446 421h7v1h-7zM446 422h6v1h-6zM447 423h5v1h-5zM447 424h4v1h-4zM448 425h3v1h-3zM448 426h2v1h-2zM449 427h1v1h-1z" fill="#e00000"/>
<path d="M444 419h11v1h-11zM449 429h1v1h-1z" fill="#000"/>
<path d="M545 415h10v1h-10zM546 416h9v1h-9zM546 417h8v1h-8zM547 418h7v1h-7zM547 419h6v1h-6zM548 420h5v1h-5zM548 421h4v1h-4zM549 422h3v1h-3zM549 423h2v1h-2z" fill="#000"/>
<path d="M546 415h8v1h-8zM547 416h7v1h-7zM547 417h6v1h-6zM548 418h5v1h-5zM548 419h4v1h-4zM549 420h3v1h-3zM549 421h2v1h-2zM550 422h1v1h-1z" fill="#e00000"/>
<path d="M545 414h11v1h-11zM550 424h1v1h-1z" fill="#000"/>
<path d="M571 475h10v1h-10zM572 476h9v1h-9zM572 477h8v1h-8zM573 478h7v1h-7zM573 479h6v1h-6zM574 480h5v1h-5zM574 481h4v1h-4zM575 482h3v1h-3zM575 483h2v1h-2z" fill="#000"/>
<path d="M572 475h8v1h-8zM573 476h7v1h-7zM573 477h6v1h-6zM574 478h5v1h-5zM574 479h4v1h-4zM575 480h3v1h-3zM575 481h2v1h-2zM576 482h1v1h-1z" fill="#e00000"/>
<path d="M571 474h11v1h-11zM576 484h1v1h-1z" fill="#000"/>
<path d="M611 442h10v1h-10zM612 443h9v1h-9zM612 444h8v1h-8zM613 445h7v1h-7zM613 446h6v1h-6zM614 447h5v1h-5zM614 448h4v1h-4zM615 449h3v1h-3zM615 450h2v1h-2z" fill="#000"/>
<path d="M612 442h8v1h-8zM613 443h7v1h-7zM613 444h6v1h-6zM614 445h5v1h-5zM614 446h4v1h-4zM615 447h3v1h-3zM615 448h2v1h-2zM616 449h1v1h-1z" fill="#e00000"/>
<path d="M611 441h11v1h-11zM616 451h1v1h-1z" fill="#000"/>
<path d="M681 420h10v1h-10zM682 421h9v1h-9zM682 422h8v1h-8zM683 423h7v1h-7zM683 424h6v1h-6zM684 425h5v1h-5zM684 426h4v1h-4zM685 427h3v1h-3zM685 428h2v1h-2z" fill="#000"/>
<path d="M682 420h8v1h-8zM683 421h7v1h-7zM683 422h6v1h-6zM684 423h5v1h-5zM684 424h4v1h-4zM685 425h3v1h-3zM685 426h2v1h-2zM686 427h1v1h-1z" fill="#e00000"/>
<path d="M681 419h11v1h-11zM686 429h1v1h-1z" fill="#000"/>
</g>
<g shape-rendering="crispEdges">
<rect x="44.5" y="98.5" width="195" height="19" fill="#fff" stroke="#000"/>
<rect x="49" y="108" width="12" height="1" fill="#0000ff"/>
<rect x="44.5" y="357.5" width="184" height="19" fill="#fff" stroke="#000"/>
<rect x="49" y="367" width="12" height="1" fill="#0000ff"/>
<rect x="718.5" y="96.5" width="17" height="17" fill="#fff" stroke="#000"/>
<rect x="718.5" y="355.5" width="17" height="17" fill="#fff" stroke="#000"/>
<rect x="27.5" y="355.5" width="13" height="17" fill="#fff" stroke="#000"/>
<rect x="720" y="363" width="7" height="1"/><rect x="720" y="365" width="7" height="1"/><rect x="720" y="370" width="12" height="1"/><rect x="729" y="367" width="2" height="2"/>
<rect x="30" y="369" width="8" height="1"/>
</g>
<text x="65" y="113" letter-spacing="-0.08">Close (*) 3720,64 EUR (10.8.)</text>
<text x="65" y="372" letter-spacing="-0.08">DBS10/3 (*) 14,5352 (10.8.)</text>
<text x="726" y="109" text-anchor="middle">%</text>
<text x="34" y="368" text-anchor="middle" font-weight="bold" font-size="12">a</text>
<text x="379" y="92" text-anchor="middle" font-weight="bold">.DAX (X) / XETRA 30.09.03 bis 10.08.04</text>
<text x="34" y="105" text-anchor="end">4200</text>
<text x="34" y="157" text-anchor="end">4000</text>
<text x="34" y="210" text-anchor="end">3800</text>
<text x="34" y="262" text-anchor="end">3600</text>
<text x="34" y="314" text-anchor="end">3400</text>
<text x="723.5" y="157">23%</text>
<text x="723.5" y="210">17%</text>
<text x="723.5" y="262">11%</text>
<text x="723.5" y="314">4%</text>
<text x="34" y="392" text-anchor="end">100</text>
<text x="723.5" y="392">100</text>
<text x="34" y="435" text-anchor="end">80</text>
<text x="723.5" y="435">80</text>
<text x="34" y="479" text-anchor="end">60</text>
<text x="723.5" y="479">60</text>
<text x="34" y="523" text-anchor="end">40</text>
<text x="723.5" y="523">40</text>
<text x="34" y="566" text-anchor="end">20</text>
<text x="723.5" y="566">20</text>
<text x="34" y="610" text-anchor="end">0</text>
<text x="723.5" y="610">0</text>
<text x="113" y="627" letter-spacing="-0.4">Nov 03</text>
<text x="237" y="627" letter-spacing="-0.4">Jan 04</text>
<text x="359" y="627" letter-spacing="-0.4">Mrz 04</text>
<text x="489" y="627" letter-spacing="-0.4">Mai 04</text>
<text x="614" y="627" letter-spacing="-0.4">Jul 04</text>
</svg>
<svg class="abs" style="left:752px;top:77px" width="29" height="555" viewBox="752 77 29 555" font-family="'Liberation Sans',sans-serif">
<g shape-rendering="crispEdges">
<rect x="752" y="77" width="28" height="1" fill="#808080"/><rect x="752" y="77" width="1" height="554" fill="#808080"/>
<rect x="753" y="78" width="26" height="1" fill="#fff"/><rect x="753" y="78" width="1" height="552" fill="#fff"/>
<rect x="779" y="77" width="1" height="554" fill="#808080"/><rect x="780" y="77" width="1" height="555" fill="#fff"/>
<rect x="756" y="81" width="21" height="3" fill="#c0c0c0"/><rect x="756" y="81" width="21" height="1" fill="#fff"/><rect x="756" y="81" width="1" height="3" fill="#fff"/><rect x="756" y="83" width="21" height="1" fill="#808080"/><rect x="776" y="81" width="1" height="3" fill="#808080"/>
<rect x="753" y="225" width="26" height="1" fill="#808080"/><rect x="753" y="226" width="26" height="1" fill="#fff"/>
<rect x="756" y="229" width="21" height="3" fill="#c0c0c0"/><rect x="756" y="229" width="21" height="1" fill="#fff"/><rect x="756" y="229" width="1" height="3" fill="#fff"/><rect x="756" y="231" width="21" height="1" fill="#808080"/><rect x="776" y="229" width="1" height="3" fill="#808080"/>
<rect x="753" y="323" width="26" height="1" fill="#808080"/><rect x="753" y="324" width="26" height="1" fill="#fff"/>
<rect x="756" y="327" width="21" height="3" fill="#c0c0c0"/><rect x="756" y="327" width="21" height="1" fill="#fff"/><rect x="756" y="327" width="1" height="3" fill="#fff"/><rect x="756" y="329" width="21" height="1" fill="#808080"/><rect x="776" y="327" width="1" height="3" fill="#808080"/>
<rect x="753" y="487" width="26" height="1" fill="#808080"/><rect x="753" y="488" width="26" height="1" fill="#fff"/>
<rect x="756" y="491" width="21" height="3" fill="#c0c0c0"/><rect x="756" y="491" width="21" height="1" fill="#fff"/><rect x="756" y="491" width="1" height="3" fill="#fff"/><rect x="756" y="493" width="21" height="1" fill="#808080"/><rect x="776" y="491" width="1" height="3" fill="#808080"/>
<rect x="755" y="198" width="23" height="1" fill="#808080"/><rect x="755" y="199" width="23" height="1" fill="#fff"/>
</g>
<path d="M759.5 90.5L773 102.5" stroke="#000" stroke-width="1.1"/>
<path d="M759.5 112.5L773 120.5M759.5 117.5L773 125.5" stroke="#000" stroke-width="1.6"/>
<text x="765.2" y="145.6" font-size="17" font-weight="bold" text-anchor="middle" font-family="'Liberation Serif',serif">A</text>
<path d="M764.5 155.5C769 156 769 160 765.5 162C761 164.5 762 168.5 766 169.5" stroke="#000" stroke-width="1.6" fill="none"/>
<path d="M758.3 184C759.5 179 765 178.5 766 185.5C767 192 772.5 191.5 773.7 186" stroke="#000" stroke-width="1.05" fill="none"/>
<path d="M759.5 206.5L772.5 218M772 206.5L760 218" stroke="#ff0000" stroke-width="1.9"/>
<g stroke="#000" fill="none"><path d="M760.5 238.5L772.5 251.5" stroke-width="1.7"/><path d="M760.5 239.5L758.3 241.7" stroke-width="1.1"/><path d="M772.7 244.8L768 250.5" stroke-width="1.1"/></g>
<g shape-rendering="crispEdges" fill="#000"><rect x="758" y="238" width="4" height="1"/><rect x="762" y="241" width="1" height="7"/><rect x="766" y="241" width="1" height="6"/><rect x="767" y="246" width="1" height="6"/></g>
<text x="757.5" y="251.8" font-size="6.5" font-weight="bold">R</text>
<g stroke="#000" fill="none" stroke-width="1.5"><path d="M763.5 259.5L772 268.5"/><path d="M760.5 264.5L770 274"/></g>
<g shape-rendering="crispEdges" fill="#000"><rect x="759" y="259" width="1" height="3"/><rect x="761" y="259" width="1" height="3"/><rect x="764" y="259" width="1" height="7"/><rect x="762" y="262" width="1" height="3"/><rect x="766" y="266" width="1" height="4"/><rect x="768" y="267" width="1" height="3"/><rect x="768" y="274" width="4" height="1"/><rect x="770" y="270" width="1" height="4"/><rect x="772" y="271" width="1" height="3"/></g>
<text x="757.5" y="274" font-size="6.5" font-weight="bold">G</text>
<g stroke="#000" fill="none" stroke-width="1.5"><path d="M763.5 281.5L772 290.5"/><path d="M760.5 286.5L770 296"/></g>
<g shape-rendering="crispEdges" fill="#000"><rect x="759" y="281" width="1" height="3"/><rect x="761" y="281" width="1" height="3"/><rect x="764" y="281" width="1" height="7"/><rect x="762" y="284" width="1" height="3"/><rect x="766" y="288" width="1" height="4"/><rect x="768" y="289" width="1" height="3"/><rect x="768" y="296" width="4" height="1"/><rect x="770" y="292" width="1" height="4"/><rect x="772" y="293" width="1" height="3"/></g>
<text x="757.5" y="296" font-size="6.5" font-weight="bold">E</text>
<g stroke="#000" fill="none" stroke-width="1.5"><path d="M763.5 303.5L772 312.5"/><path d="M760.5 308.5L770 318"/></g>
<g shape-rendering="crispEdges" fill="#000"><rect x="759" y="303" width="1" height="3"/><rect x="761" y="303" width="1" height="3"/><rect x="764" y="303" width="1" height="7"/><rect x="762" y="306" width="1" height="3"/><rect x="766" y="310" width="1" height="4"/><rect x="768" y="311" width="1" height="3"/><rect x="768" y="318" width="4" height="1"/><rect x="770" y="314" width="1" height="4"/><rect x="772" y="315" width="1" height="3"/></g>
<g shape-rendering="crispEdges"><rect x="758" y="313" width="4" height="1" fill="#000"/><rect x="758" y="317" width="4" height="1" fill="#000"/></g>
<g stroke="#000" fill="none" stroke-width="1.05"><path d="M758.5 347A7.5 7.5 0 0 1 773.5 347"/><path d="M761.3 347A4.7 4.7 0 0 1 770.7 347"/><path d="M764 347A2 2 0 0 1 768 347"/></g>
<g stroke="#000" fill="none"><path d="M759.5 370.5L772 358.5" stroke-width="1.1"/><path d="M759.5 370.5L773 364" stroke-width="1" stroke-dasharray="4 1"/><path d="M759.5 370.5L773 367.5" stroke-width="1" stroke-dasharray="4 1"/></g>
<g shape-rendering="crispEdges"><rect x="759" y="380" width="15" height="1" fill="#000"/>
<rect x="759" y="383" width="1" height="1" fill="#000"/>
<rect x="761" y="383" width="1" height="1" fill="#000"/>
<rect x="763" y="383" width="1" height="1" fill="#000"/>
<rect x="765" y="383" width="1" height="1" fill="#000"/>
<rect x="767" y="383" width="1" height="1" fill="#000"/>
<rect x="769" y="383" width="1" height="1" fill="#000"/>
<rect x="771" y="383" width="1" height="1" fill="#000"/>
<rect x="773" y="383" width="1" height="1" fill="#000"/>
<rect x="759" y="387" width="1" height="1" fill="#000"/>
<rect x="761" y="387" width="1" height="1" fill="#000"/>
<rect x="763" y="387" width="1" height="1" fill="#000"/>
<rect x="765" y="387" width="1" height="1" fill="#000"/>
<rect x="767" y="387" width="1" height="1" fill="#000"/>
<rect x="769" y="387" width="1" height="1" fill="#000"/>
<rect x="771" y="387" width="1" height="1" fill="#000"/>
<rect x="773" y="387" width="1" height="1" fill="#000"/>
<rect x="759" y="392" width="1" height="1" fill="#000"/>
<rect x="761" y="392" width="1" height="1" fill="#000"/>
<rect x="763" y="392" width="1" height="1" fill="#000"/>
<rect x="765" y="392" width="1" height="1" fill="#000"/>
<rect x="767" y="392" width="1" height="1" fill="#000"/>
<rect x="769" y="392" width="1" height="1" fill="#000"/>
<rect x="771" y="392" width="1" height="1" fill="#000"/>
<rect x="773" y="392" width="1" height="1" fill="#000"/>
<rect x="759" y="401" width="1" height="1" fill="#000"/>
<rect x="759" y="403" width="1" height="1" fill="#000"/>
<rect x="759" y="405" width="1" height="1" fill="#000"/>
<rect x="759" y="407" width="1" height="1" fill="#000"/>
<rect x="759" y="409" width="1" height="1" fill="#000"/>
<rect x="759" y="411" width="1" height="1" fill="#000"/>
<rect x="759" y="413" width="1" height="1" fill="#000"/>
<rect x="759" y="415" width="1" height="1" fill="#000"/>
<rect x="761" y="401" width="2" height="15" fill="#000"/><rect x="765" y="401" width="1" height="15" fill="#000"/><rect x="769" y="401" width="1" height="15" fill="#000"/><rect x="773" y="401" width="1" height="15" fill="#000"/>
</g>
<path d="M760 437L773 424.5" stroke="#000" stroke-width="1.2"/>
<g stroke="#000" stroke-width="1.1" fill="none"><path d="M758.5 459.5L765.5 445.5M758.5 459.5L772.5 445.5M758.5 459.5L774 451.5M758.5 459.5L774 455M758.5 459.5H774"/></g><path d="M758.5 459.5L761.5 454L764 459.5Z" fill="#000"/>
<g stroke="#000" stroke-width="1" fill="none"><path d="M759.5 467.5L773.5 481.5M759.5 481.5L773.5 467.5M759.5 474.5L766.5 467.5L773.5 474.5L766.5 481.5Z"/></g>
<g shape-rendering="crispEdges"><rect x="758.5" y="501.5" width="14" height="11" fill="none" stroke="#000"/>
<rect x="758.5" y="567.5" width="14" height="11" fill="#808080" stroke="#000"/></g>
<ellipse cx="765.5" cy="529" rx="7" ry="5.5" fill="none" stroke="#000" stroke-width="1"/>
<rect x="758.5" y="545.5" width="14" height="11" rx="3.5" fill="none" stroke="#000" stroke-width="1"/>
<rect x="758.5" y="589.5" width="14" height="11" rx="3.5" fill="#808080" stroke="#000" stroke-width="1"/>
<path d="M761.5 621V628L758 624.5Z" fill="#000"/>
<path d="M770.5 621L773 623.5L775.5 621M770.5 625L773 627.5L775.5 625" stroke="#000" stroke-width="1.3" fill="none"/>
</svg>
<!-- bottom lines -->
<div class="abs sh" style="left:752px;top:630px;width:28px;height:1px"></div>
<div class="abs sh" style="left:4px;top:630px;width:747px;height:1px"></div>
<div class="abs hl" style="left:4px;top:631px;width:777px;height:1px"></div>
<!-- status bar -->
<div class="abs st" style="left:6.6px;top:635.4px;font-size:12px;line-height:14px;transform-origin:0 0;transform:scaleX(.845)">Cursorposition:</div>
<div class="abs sunk" style="left:80px;top:634px;width:78px;height:18px"></div>
<div class="abs st" style="left:120px;top:635.6px;width:36.4px;text-align:right;font-size:12px;line-height:14px">n/a</div>
<div class="abs sunk" style="left:160px;top:634px;width:119px;height:18px"></div>
<div class="abs st" style="left:240px;top:635.6px;width:36.4px;text-align:right;font-size:12px;line-height:14px">n/a</div>
<div class="abs sunk" style="left:280px;top:634px;width:79px;height:18px"></div>
<div class="abs st" style="left:320px;top:635.6px;width:36.4px;text-align:right;font-size:12px;line-height:14px">n/a</div>
<div class="abs st" style="left:362px;top:635.4px;font-size:12px;line-height:14px;transform-origin:0 0;transform:scaleX(.89)">Nachrichten:</div>
<div class="abs sunk" style="left:426px;top:634px;width:355px;height:18px"></div>
<svg class="abs" style="left:767px;top:638px" width="13" height="13" viewBox="0 0 13 13" shape-rendering="crispEdges">
<rect x="0" y="0" width="13" height="13" fill="#c0c0c0"/>
<path d="M0 13L13 0M4 13L13 4M8 13L13 8" stroke="#fff" stroke-width="1.4"/>
<path d="M1.5 13L13 1.5M2.5 13L13 2.5M5.5 13L13 5.5M6.5 13L13 6.5M9.5 13L13 9.5M10.5 13L13 10.5" stroke="#808080" stroke-width="1"/>
</svg>

</body></html>
